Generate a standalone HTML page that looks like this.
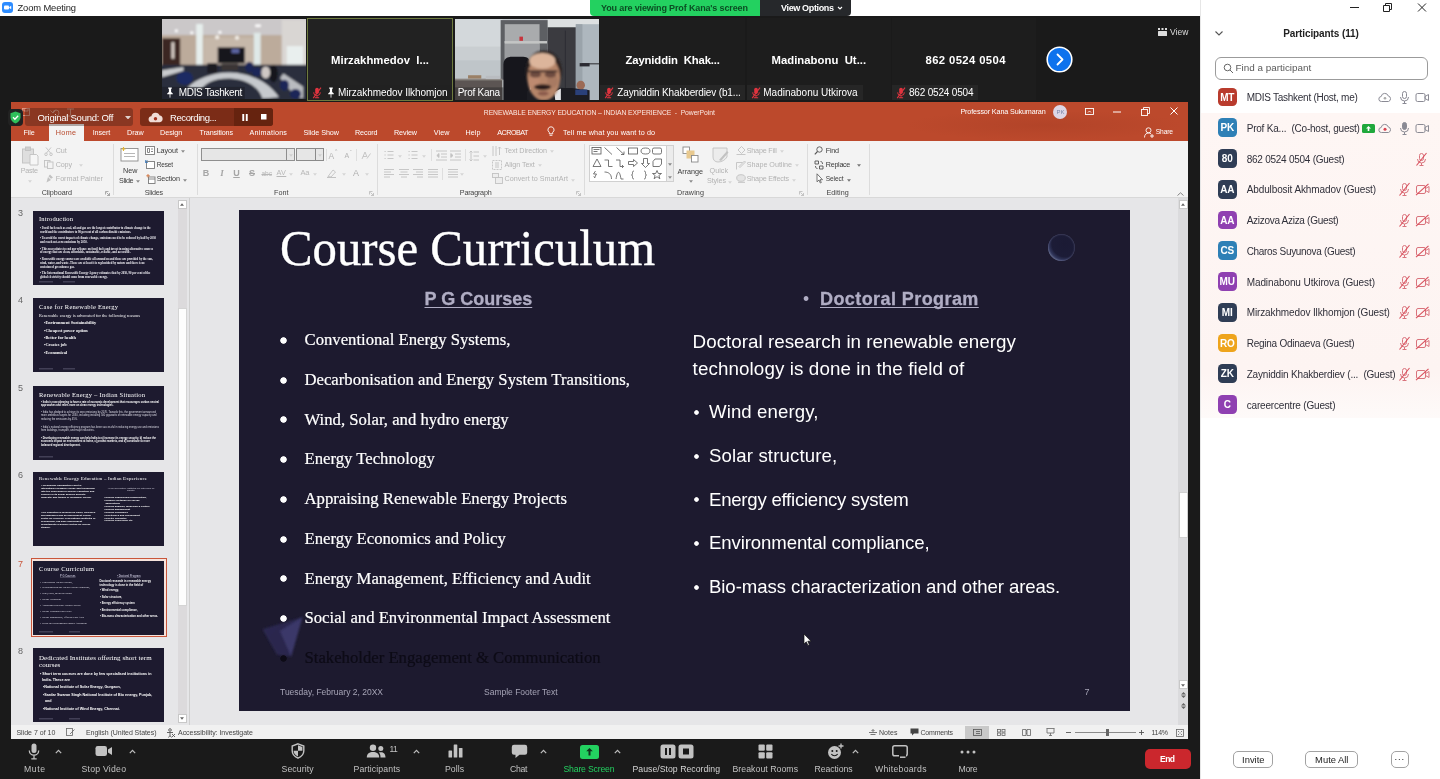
<!DOCTYPE html>
<html lang="en">
<head>
<meta charset="utf-8">
<title>Zoom Meeting</title>
<style>
*{box-sizing:border-box;margin:0;padding:0}
html,body{width:1440px;height:779px;overflow:hidden}
body{position:relative;background:#1a1a1a;font-family:"Liberation Sans",sans-serif;color:#fff;filter:saturate(1.0001)}
.abs{position:absolute}
.nw{white-space:nowrap}
/* ---------- title bar ---------- */
#titlebar{left:0;top:0;width:1440px;height:16.400px;background:#fff}
#titlebar .ttl{left:17px;top:1px;font-size:11px;color:#222;line-height:14px}
#banner{left:590px;top:0;width:170px;height:16px;background:#23d160;border-radius:0 0 0 4px;color:#0c4a22;font-size:9.5px;font-weight:bold;line-height:15px;text-align:center}
#viewopt{left:760px;top:0;width:91px;height:16px;background:#26282b;border-radius:0 0 4px 0;color:#fff;font-size:9.5px;font-weight:bold;line-height:15px;text-align:center}
/* ---------- video strip ---------- */
.tile{top:18px;height:82px;background:#232323;overflow:hidden}
.tile .big{left:0;right:0;top:31px;text-align:center;font-weight:bold;font-size:12px;line-height:20px;color:#fff;white-space:nowrap}
.tile .lbl{left:0;bottom:0;height:15px;background:rgba(20,20,20,.55);font-size:10.5px;line-height:15px;color:#fff;white-space:nowrap;padding:0 3px 0 4px}
/* ---------- ppt ---------- */
#ppt{left:11px;top:102px;width:1177px;height:637px;background:#e6e6e8;overflow:hidden}
#ppt .orange{left:0;top:0;width:1177px;height:39px;background:#bc492c}
#ribbon{left:0;top:39px;width:1177px;height:57px;background:#f3f3f3;border-bottom:1px solid #d8d8d8}
#slide{left:228px;top:108px;width:891px;height:501px;background:#1d1a2f;overflow:hidden}
#status{left:0;top:623px;width:1177px;height:14px;background:#f1f1f1;color:#444;font-size:7.5px;line-height:14px}

#lcol li{position:relative;height:39.75px;line-height:24px;padding-left:24px;white-space:nowrap}
#lcol li:before{content:"";position:absolute;left:-1.5px;top:7.85px;width:9px;height:9px;background:radial-gradient(circle at 50% 50%,#fff 2.85px,rgba(255,255,255,0) 3.65px)}
#lcol li.dk{color:#0d0b16;-webkit-text-stroke:.2px #0d0b16}
#lcol li.dk:before{background:radial-gradient(circle at 50% 50%,#0d0b16 2.85px,rgba(13,11,22,0) 3.65px)}
#rcol li{position:relative;height:43.7px;line-height:26px;padding-left:17px;white-space:nowrap}
#rcol li:before{content:"";position:absolute;left:.8px;top:9.7px;width:7px;height:7px;background:radial-gradient(circle at 50% 50%,#fff 1.9px,rgba(255,255,255,0) 2.7px)}
.ft{font-size:8.5px;line-height:12px;color:#a6a4b6}
/* ---------- zoom toolbar ---------- */
#ztb{left:0;top:739px;width:1200px;height:40px;background:#1a1a1a}
.zb{top:0;height:40px;text-align:center;color:#c9c9c9;font-size:9.5px;white-space:nowrap}
.zb span{position:absolute;left:-30px;right:-30px;top:24px;line-height:12px}
/* ---------- participants ---------- */
#pp{left:1200px;top:0;width:240px;height:779px;background:#fff;color:#222;border-left:1px solid #e6e6e6}
.row{left:0;width:240px;height:31px}
.av{left:16.7px;top:5.7px;width:19px;height:18.8px;border-radius:4.5px;color:#fff;font-size:10px;letter-spacing:-.2px;font-weight:bold;line-height:19px;text-align:center}
.nm{left:45.7px;top:8.2px;font-size:10px;line-height:16px;color:#30303a;white-space:nowrap}
.btn{top:751.2px;height:17.3px;border:1px solid #a2a2a2;border-radius:5px;font-size:9.4px;line-height:15.5px;text-align:center;color:#222;background:#fff}
</style>
</head>
<body>
<!-- ===== TITLE BAR ===== -->
<div id="titlebar" class="abs">
<svg class="abs" style="left:2px;top:2px" width="11" height="11" viewBox="0 0 11 11"><rect width="11" height="11" rx="3" fill="#2d8cff"/><rect x="2" y="3.5" width="5" height="4" rx="1" fill="#fff"/><path d="M7.3 5 9.2 3.800v3.400L7.300 6z" fill="#fff"/></svg>
<div class="abs nw" style="left:17.5px;top:1.2px;font-size:9.4px;line-height:13px;color:#1c1c1c;letter-spacing:-0.13px">Zoom Meeting</div>
</div>
<div id="banner" class="abs"></div>
<div class="abs nw" style="left:601.0px;top:1.5px;font-size:9px;line-height:13px;color:#0b4d23;font-weight:bold;letter-spacing:-0.14px">You are viewing Prof Kana's screen</div>
<div id="viewopt" class="abs"></div>
<div class="abs nw" style="left:781.0px;top:1.5px;font-size:9px;line-height:13px;color:#fff;font-weight:bold;letter-spacing:-0.35px">View Options</div>
<svg class="abs" style="left:837.0px;top:6.2px" width="6" height="5" viewBox="0 0 6 5"><path d="M1 1l2 2 2-2" fill="none" stroke="#fff" stroke-width="1.1"/></svg>
<!-- ===== VIDEO STRIP ===== -->
<div id="strip">
<div class="abs" style="left:162px;top:19px;width:144px;height:80px;background:#b9a898;overflow:hidden"><svg class="abs" style="left:0;top:0" width="144" height="80" viewBox="20 25 1305 725" preserveAspectRatio="none">
<defs><filter id="b1" x="-5%" y="-5%" width="110%" height="110%"><feGaussianBlur stdDeviation="12"/></filter></defs>
<g filter="url(#b1)">
<rect x="-20" y="0" width="1400" height="180" fill="#cbc8c9"/>
<rect x="-20" y="170" width="1400" height="290" fill="#bcab9b"/>
<rect x="400" y="190" width="450" height="250" fill="#c6b8aa"/>
<rect x="20" y="200" width="165" height="270" fill="#3b2620"/>
<rect x="105" y="235" width="28" height="150" fill="#d8cfc8"/>
<rect x="330" y="70" width="60" height="430" fill="#e6eeec"/>
<rect x="852" y="150" width="62" height="320" fill="#dfe9e8"/>
<rect x="1105" y="30" width="230" height="500" fill="#d9d6d3"/>
<rect x="1150" y="270" width="150" height="220" fill="#e9efee"/>
<rect x="-20" y="440" width="1400" height="330" fill="#2b2f3d"/>
<rect x="525" y="282" width="245" height="145" fill="#14131a"/>
<rect x="650" y="295" width="70" height="40" fill="#5c64a0"/>
<path d="M20 490 215 460v35L20 552z" fill="#c9cbcd"/>
<path d="M250 650C330 560 500 505 640 510s330 60 440 225l-150 10C900 640 780 570 640 565S420 600 380 660z" fill="#c6c9cd"/>
<path d="M1120 520 1300 640v100h-60L1090 560z" fill="#b9bbc0"/>
<ellipse cx="225" cy="560" rx="75" ry="60" fill="#1f2b63"/>
<ellipse cx="812" cy="462" rx="38" ry="50" fill="#1d2758"/>
<ellipse cx="880" cy="505" rx="45" ry="40" fill="#1d2758"/>
<ellipse cx="1030" cy="520" rx="40" ry="80" fill="#15151d"/>
<ellipse cx="960" cy="510" rx="40" ry="55" fill="#cfc8c4"/>
<ellipse cx="1130" cy="625" rx="40" ry="50" fill="#1d2758"/>
<ellipse cx="1230" cy="705" rx="50" ry="45" fill="#1d2758"/>
<rect x="430" y="425" width="90" height="90" fill="#1b1b22"/>
<rect x="560" y="430" width="150" height="60" fill="#3a3436"/>
<circle cx="150" cy="132" r="14" fill="#fff"/><circle cx="290" cy="150" r="14" fill="#fff"/><circle cx="545" cy="145" r="14" fill="#fff"/><circle cx="520" cy="190" r="18" fill="#f4f1ea"/><circle cx="700" cy="195" r="18" fill="#f4f1ea"/><rect x="865" y="75" width="50" height="22" fill="#fff"/>
</g>
<rect x="20" y="640" width="750" height="115" fill="#1a1c22" opacity=".55"/>
</svg></div>
<svg class="abs" style="left:166.0px;top:86.5px" width="8" height="11" viewBox="0 0 8 11"><path d="M2.200.5h3.600v.9l-.7.500v3l1.700 1.500v.8H4.400V10.300L4 11l-.4-.7V7.200H1.200v-.8l1.700-1.500v-3l-.7-.5z" fill="#fff"/></svg>
<div class="abs nw" style="left:178.8px;top:85.9px;font-size:10px;line-height:14px;color:#fff;letter-spacing:-0.35px">MDIS Tashkent</div>
<div class="abs" style="left:307px;top:18px;width:146px;height:83px;background:#222;border:1px solid #6d7a3e"></div>
<div class="abs" style="left:308px;top:85px;width:144px;height:15px;background:rgba(34,34,34,.6)"></div>
<div class="abs nw" style="left:331.0px;top:51.5px;font-size:11.3px;line-height:16px;color:#fff;font-weight:bold;letter-spacing:0.04px">Mirzakhmedov&nbsp; I...</div>
<svg class="abs" style="left:311.5px;top:87.0px" width="10" height="12" viewBox="0 0 10 12"><g fill="#e0343f" stroke="none"><rect x="3.2" y=".8" width="3.600" height="6.200" rx="1.800"/><path d="M1.300 5.200h.9a2.800 2.800 0 0 0 5.600 0h.9a3.700 3.700 0 0 1-3.250 3.650V10.300h1.700v.9H2.850v-.9h1.700V8.850A3.700 3.700 0 0 1 1.300 5.200z"/></g><path d="M9 .6 1.200 11.200" stroke="#e0343f" stroke-width="1.100"/></svg>
<svg class="abs" style="left:326.5px;top:86.5px" width="8" height="11" viewBox="0 0 8 11"><path d="M2.200.5h3.600v.9l-.7.500v3l1.700 1.500v.8H4.400V10.300L4 11l-.4-.7V7.200H1.200v-.8l1.700-1.500v-3l-.7-.5z" fill="#fff"/></svg>
<div class="abs nw" style="left:338.0px;top:85.9px;font-size:10px;line-height:14px;color:#fff;letter-spacing:-0.05px">Mirzakhmedov Ilkhomjon</div>
<div class="abs" style="left:454.5px;top:19px;width:144px;height:80.5px;background:#c8cdd0;overflow:hidden"><svg class="abs" style="left:0;top:0" width="144" height="80.5" viewBox="42 25 1303 730" preserveAspectRatio="none">
<defs><filter id="b2" x="-5%" y="-5%" width="110%" height="110%"><feGaussianBlur stdDeviation="6"/></filter><filter id="b3" x="-20%" y="-20%" width="140%" height="140%"><feGaussianBlur stdDeviation="11"/></filter></defs>
<g filter="url(#b2)">
<rect x="0" y="0" width="1400" height="800" fill="#c9ced1"/>
<rect x="42" y="25" width="430" height="250" fill="#d3d8db"/><rect x="42" y="400" width="430" height="180" fill="#bfc5c9"/>
<rect x="880" y="0" width="500" height="120" fill="#dde0e1"/>
<rect x="455" y="35" width="425" height="540" fill="#5d5f63"/>
<rect x="492" y="72" width="315" height="340" fill="#a9abad"/>
<rect x="492" y="250" width="315" height="170" fill="#9b9da0"/>
<rect x="490" y="225" width="385" height="22" fill="#c3c5c4"/>
<rect x="625" y="185" width="32" height="38" fill="#c8343c"/>
<rect x="880" y="100" width="310" height="560" fill="#3a3b41"/>
<rect x="1036" y="130" width="8" height="520" fill="#2b2c31"/>
<rect x="1135" y="72" width="230" height="700" fill="#aeb7be"/>
<rect x="1135" y="72" width="60" height="700" fill="#9aa3aa"/>
<rect x="1190" y="425" width="170" height="12" fill="#4a4d52"/>
<rect x="1170" y="425" width="90" height="30" fill="#2a2b30"/>
<rect x="0" y="572" width="470" height="200" fill="#5b5552"/>
<rect x="0" y="566" width="470" height="16" fill="#8a8480"/>
<rect x="160" y="535" width="120" height="30" fill="#9b8066"/>
<rect x="320" y="540" width="130" height="30" fill="#b9bcc0"/>
<path d="M480 760V440c0-50 30-72 80-72h100c40 0 60 25 60 60v332z" fill="#17171d"/>
<path d="M690 760V670c100-30 400-30 570 0v90z" fill="#1a1a20"/>
<ellipse cx="1180" cy="625" rx="38" ry="40" fill="#9c6a55"/>
<rect x="1130" y="665" width="110" height="50" fill="#2a3f7a"/>
<path d="M940 690 1000 655v110H950z" fill="#e4e4e6"/>
</g>
<g filter="url(#b3)">
<ellipse cx="845" cy="500" rx="165" ry="190" fill="#2b2321"/>
<ellipse cx="845" cy="560" rx="148" ry="205" fill="#b58569"/>
<ellipse cx="832" cy="405" rx="118" ry="72" fill="#dcb59b"/>
<ellipse cx="760" cy="590" rx="50" ry="60" fill="#bd8a70"/>
<ellipse cx="925" cy="590" rx="50" ry="60" fill="#a87a62"/>
<ellipse cx="770" cy="528" rx="52" ry="28" fill="#6e4c3f"/>
<ellipse cx="905" cy="528" rx="52" ry="28" fill="#6e4c3f"/>
<rect x="700" y="492" width="270" height="16" rx="8" fill="#2f2320"/>
<ellipse cx="835" cy="642" rx="78" ry="26" fill="#2c1d1a"/>
<ellipse cx="840" cy="700" rx="50" ry="20" fill="#8a5a4b"/>
</g>
<rect x="42" y="645" width="440" height="115" fill="#2a2a2c" opacity=".5"/>
</svg>
</div>
<div class="abs nw" style="left:457.7px;top:85.9px;font-size:10px;line-height:14px;color:#fff;letter-spacing:-0.25px">Prof Kana</div>
<div class="abs" style="left:599.5px;top:18px;width:145px;height:82px;background:#1d1d1d"></div>
<div class="abs" style="left:599.5px;top:85px;width:145px;height:15px;background:#262626"></div>
<div class="abs" style="left:747px;top:18px;width:144px;height:82px;background:#1d1d1d"></div>
<div class="abs" style="left:747px;top:85px;width:115.5px;height:15px;background:#262626"></div>
<div class="abs" style="left:892px;top:18px;width:144px;height:82px;background:#1d1d1d"></div>
<div class="abs" style="left:892px;top:85px;width:86px;height:15px;background:#262626"></div>
<div class="abs nw" style="left:625.5px;top:51.5px;font-size:11.3px;line-height:16px;color:#fff;font-weight:bold;letter-spacing:-0.13px">Zayniddin&nbsp; Khak...</div>
<svg class="abs" style="left:603.5px;top:87.0px" width="10" height="12" viewBox="0 0 10 12"><g fill="#e0343f" stroke="none"><rect x="3.2" y=".8" width="3.600" height="6.200" rx="1.800"/><path d="M1.300 5.200h.9a2.800 2.800 0 0 0 5.600 0h.9a3.700 3.700 0 0 1-3.250 3.650V10.300h1.700v.9H2.850v-.9h1.700V8.850A3.700 3.700 0 0 1 1.300 5.200z"/></g><path d="M9 .6 1.200 11.200" stroke="#e0343f" stroke-width="1.100"/></svg>
<div class="abs nw" style="left:617.3px;top:85.9px;font-size:10px;line-height:14px;color:#fff;letter-spacing:-0.14px">Zayniddin Khakberdiev (b1...</div>
<div class="abs nw" style="left:771.5px;top:51.5px;font-size:11.3px;line-height:16px;color:#fff;font-weight:bold;letter-spacing:0.03px">Madinabonu&nbsp; Ut...</div>
<svg class="abs" style="left:750.5px;top:87.0px" width="10" height="12" viewBox="0 0 10 12"><g fill="#e0343f" stroke="none"><rect x="3.2" y=".8" width="3.600" height="6.200" rx="1.800"/><path d="M1.300 5.200h.9a2.800 2.800 0 0 0 5.600 0h.9a3.700 3.700 0 0 1-3.250 3.650V10.300h1.700v.9H2.850v-.9h1.700V8.850A3.700 3.700 0 0 1 1.300 5.200z"/></g><path d="M9 .6 1.200 11.200" stroke="#e0343f" stroke-width="1.100"/></svg>
<div class="abs nw" style="left:763.3px;top:85.9px;font-size:10px;line-height:14px;color:#fff;letter-spacing:-0.01px">Madinabonu Utkirova</div>
<div class="abs nw" style="left:925.5px;top:51.5px;font-size:11.3px;line-height:16px;color:#fff;font-weight:bold;letter-spacing:0.38px">862 0524 0504</div>
<svg class="abs" style="left:895.5px;top:87.0px" width="10" height="12" viewBox="0 0 10 12"><g fill="#e0343f" stroke="none"><rect x="3.2" y=".8" width="3.600" height="6.200" rx="1.800"/><path d="M1.300 5.200h.9a2.800 2.800 0 0 0 5.600 0h.9a3.700 3.700 0 0 1-3.250 3.650V10.300h1.700v.9H2.850v-.9h1.700V8.850A3.700 3.700 0 0 1 1.300 5.200z"/></g><path d="M9 .6 1.200 11.200" stroke="#e0343f" stroke-width="1.100"/></svg>
<div class="abs nw" style="left:909.0px;top:85.9px;font-size:10px;line-height:14px;color:#fff;letter-spacing:-0.19px">862 0524 0504</div>
<svg class="abs" style="left:1046.0px;top:46.0px" width="27" height="27" viewBox="0 0 27 27"><circle cx="13.500" cy="13.500" r="12.300" fill="#0e72ed" stroke="#fff" stroke-width="1.600"/><path d="M11.500 8.500l5 5-5 5" fill="none" stroke="#fff" stroke-width="1.800" stroke-linecap="round" stroke-linejoin="round"/></svg>
<svg class="abs" style="left:1157.5px;top:27.5px" width="9" height="8" viewBox="0 0 9 8"><g fill="#ddd"><rect x="0" y="0" width="2" height="2"/><rect x="3.500" y="0" width="2" height="2"/><rect x="7" y="0" width="2" height="2"/><rect x="0" y="3" width="9" height="5" rx=".5"/></g></svg>
<div class="abs nw" style="left:1170.0px;top:25.5px;font-size:8.5px;line-height:12px;color:#ddd;letter-spacing:0.07px">View</div>
</div>
<!-- ===== POWERPOINT WINDOW ===== -->
<div id="ppt" class="abs">
<div class="abs orange"></div>
<div class="abs" style="left:889.0px;top:10.0px;width:288.0px;height:29.0px;background:radial-gradient(ellipse at 50% 45%,#a93f25 0,rgba(169,63,37,0) 68%);opacity:.5"></div>
<svg class="abs" style="left:10.0px;top:5.0px" width="60" height="10" viewBox="0 0 60 10"><g fill="none" stroke="#e9b6a6" stroke-width=".9" opacity=".75"><rect x="1.500" y="1.500" width="7" height="7"/><path d="M3 1.500v2.500h4V1.500M32 6a3 3 0 1 1 3 3M29.500 3.500 32 6l2.500-2.500M46 2h7M49.500 2v6M45 9h9"/></g></svg>
<div class="abs" style="left:38.0px;top:21.5px;width:35.0px;height:18.0px;background:#f3f3f3"></div>
<div class="abs nw" style="left:12.5px;top:26.0px;font-size:7.2px;line-height:10px;color:#fff;letter-spacing:-0.10px">File</div>
<div class="abs nw" style="left:81.7px;top:26.0px;font-size:7.2px;line-height:10px;color:#fff;letter-spacing:-0.06px">Insert</div>
<div class="abs nw" style="left:116.0px;top:26.0px;font-size:7.2px;line-height:10px;color:#fff;letter-spacing:0.01px">Draw</div>
<div class="abs nw" style="left:149.0px;top:26.0px;font-size:7.2px;line-height:10px;color:#fff;letter-spacing:-0.01px">Design</div>
<div class="abs nw" style="left:188.6px;top:26.0px;font-size:7.2px;line-height:10px;color:#fff;letter-spacing:-0.15px">Transitions</div>
<div class="abs nw" style="left:238.6px;top:26.0px;font-size:7.2px;line-height:10px;color:#fff;letter-spacing:0.20px">Animations</div>
<div class="abs nw" style="left:292.5px;top:26.0px;font-size:7.2px;line-height:10px;color:#fff;letter-spacing:-0.05px">Slide Show</div>
<div class="abs nw" style="left:344.0px;top:26.0px;font-size:7.2px;line-height:10px;color:#fff;letter-spacing:-0.13px">Record</div>
<div class="abs nw" style="left:383.0px;top:26.0px;font-size:7.2px;line-height:10px;color:#fff;letter-spacing:-0.12px">Review</div>
<div class="abs nw" style="left:422.8px;top:26.0px;font-size:7.2px;line-height:10px;color:#fff;letter-spacing:0.05px">View</div>
<div class="abs nw" style="left:454.4px;top:26.0px;font-size:7.2px;line-height:10px;color:#fff;letter-spacing:0.13px">Help</div>
<div class="abs nw" style="left:486.3px;top:26.0px;font-size:7.2px;line-height:10px;color:#fff;letter-spacing:-0.50px">ACROBAT</div>
<div class="abs nw" style="left:44.8px;top:26.0px;font-size:7.2px;line-height:10px;color:#b7472a;letter-spacing:0.34px">Home</div>
<svg class="abs" style="left:535.5px;top:24.0px" width="8" height="11" viewBox="0 0 8 11"><g fill="none" stroke="#fff" stroke-width=".9"><path d="M4 .8a3 3 0 0 1 1.700 5.500v1.500H2.300V6.300A3 3 0 0 1 4 .8zM2.600 9.300h2.800"/></g></svg>
<div class="abs nw" style="left:552.0px;top:26.0px;font-size:7.2px;line-height:10px;color:#fff;letter-spacing:0.13px">Tell me what you want to do</div>
<div class="abs nw" style="left:472.8px;top:6.0px;font-size:6.8px;line-height:10px;color:#fbe9e3;letter-spacing:-0.07px">RENEWABLE ENERGY EDUCATION &ndash; INDIAN EXPERIENCE &nbsp;-&nbsp; PowerPoint</div>
<div class="abs nw" style="left:949.4px;top:4.5px;font-size:7.2px;line-height:10px;color:#fff;letter-spacing:-0.13px">Professor Kana Sukumaran</div>
<div class="abs" style="left:1042.4px;top:2.5px;width:14.0px;height:14.0px;border-radius:50%;background:#ddd6e6"></div>
<div class="abs nw" style="left:1045.6px;top:5.6px;font-size:6px;line-height:8px;color:#7d86a8;letter-spacing:-0.22px">PK</div>
<svg class="abs" style="left:1073.5px;top:5.5px" width="9" height="7" viewBox="0 0 9 7"><g fill="none" stroke="#fff" stroke-width=".9"><rect x=".5" y=".5" width="8" height="6"/><path d="M3 4.500 4.500 3 6 4.500" /></g></svg>
<svg class="abs" style="left:1102.0px;top:8.5px" width="8" height="2" viewBox="0 0 8 2"><path d="M0 1h8" stroke="#fff" stroke-width="1"/></svg>
<svg class="abs" style="left:1130.0px;top:4.5px" width="9" height="9" viewBox="0 0 9 9"><g fill="none" stroke="#fff" stroke-width=".9"><rect x=".5" y="2.500" width="6" height="6"/><path d="M2.500 2.500v-2h6v6h-2"/></g></svg>
<svg class="abs" style="left:1159.0px;top:5.0px" width="8" height="8" viewBox="0 0 8 8"><path d="M.5.5l7 7M7.500.5l-7 7" stroke="#fff" stroke-width="1"/></svg>
<svg class="abs" style="left:1132.5px;top:24.5px" width="10" height="11" viewBox="0 0 10 11"><g fill="none" stroke="#fff" stroke-width=".9"><circle cx="4.500" cy="3.300" r="2.500"/><path d="M.5 10.500c0-3 1.800-4.500 4-4.500 1 0 1.800.3 2.500.8M8 7v4M6 9h4"/></g></svg>
<div class="abs nw" style="left:1144.8px;top:24.7px;font-size:6.69px;line-height:10px;color:#fff;letter-spacing:-0.16px">Share</div>
<div id="ribbon" class="abs"></div>
<div class="abs" style="left:101.5px;top:42.0px;width:1.0px;height:51.0px;background:#dcdcdc"></div>
<div class="abs" style="left:185.5px;top:42.0px;width:1.0px;height:51.0px;background:#dcdcdc"></div>
<div class="abs" style="left:365.5px;top:42.0px;width:1.0px;height:51.0px;background:#dcdcdc"></div>
<div class="abs" style="left:572.8px;top:42.0px;width:1.0px;height:51.0px;background:#dcdcdc"></div>
<div class="abs" style="left:795.7px;top:42.0px;width:1.0px;height:51.0px;background:#dcdcdc"></div>
<div class="abs" style="left:857.5px;top:42.0px;width:1.0px;height:51.0px;background:#dcdcdc"></div>
<svg class="abs" style="left:10.0px;top:44.0px" width="18" height="20" viewBox="0 0 18 20"><g fill="#dedede" stroke="#c2c2c2" stroke-width=".9"><rect x="1.500" y="3" width="11" height="14"/><rect x="4.500" y="1" width="5" height="3.500" fill="#cfcfcf"/><path d="M9 8.500h6.500l1.500 1.500v9H9z" fill="#f6f6f6"/></g></svg>
<div class="abs nw" style="left:9.8px;top:64.0px;font-size:7.2px;line-height:10px;color:#b3b3b3;letter-spacing:-0.30px">Paste</div>
<svg class="abs" style="left:16.5px;top:78.0px" width="4" height="3" viewBox="0 0 4 3"><path d="M0 .3h4L2 2.700z" fill="#d6d6d6"/></svg>
<svg class="abs" style="left:33.0px;top:44.5px" width="9" height="9" viewBox="0 0 9 9"><g fill="none" stroke="#c2c2c2" stroke-width=".9"><path d="M2 .5 6.500 6M7 .5 2.500 6"/><circle cx="2" cy="7.300" r="1.300"/><circle cx="7" cy="7.300" r="1.300"/></g></svg>
<div class="abs nw" style="left:44.8px;top:43.5px;font-size:7.2px;line-height:10px;color:#b3b3b3;letter-spacing:-0.14px">Cut</div>
<svg class="abs" style="left:33.0px;top:58.0px" width="10" height="9" viewBox="0 0 10 9"><g fill="#f3f3f3" stroke="#c2c2c2" stroke-width=".9"><rect x=".5" y=".5" width="5.500" height="6.500"/><rect x="3.500" y="2" width="5.500" height="6.500"/></g></svg>
<div class="abs nw" style="left:44.8px;top:57.5px;font-size:7.2px;line-height:10px;color:#b3b3b3;letter-spacing:-0.19px">Copy</div>
<svg class="abs" style="left:68.0px;top:62.0px" width="4" height="3" viewBox="0 0 4 3"><path d="M0 .3h4L2 2.700z" fill="#d6d6d6"/></svg>
<svg class="abs" style="left:33.5px;top:72.0px" width="9" height="9" viewBox="0 0 9 9"><g fill="#c2c2c2"><path d="M5 .5l3 3-2 1.200-2.500-2.500zM3 3l3 3-4.500 2.500z"/></g></svg>
<div class="abs nw" style="left:44.8px;top:72.0px;font-size:7.2px;line-height:10px;color:#b3b3b3;letter-spacing:-0.03px">Format Painter</div>
<div class="abs nw" style="left:30.7px;top:85.9px;font-size:7.2px;line-height:10px;color:#444;letter-spacing:-0.07px">Clipboard</div>
<svg class="abs" style="left:94.0px;top:88.5px" width="5" height="5" viewBox="0 0 5 5"><path d="M.5.5h3M.5.5v3M1.500 1.500l3 3M4.500 2v2.500H2" fill="none" stroke="#8a8a8a" stroke-width=".7"/></svg>
<svg class="abs" style="left:109.0px;top:44.5px" width="19" height="15" viewBox="0 0 19 15"><g fill="#fff" stroke="#8c8c8c" stroke-width=".9"><rect x="1" y="1.500" width="17" height="12.500"/><path d="M4 6.500h11M4 9.500h11" fill="none" stroke="#b0b0b0"/></g><path d="M3.500 0v4M1.500 2h4" stroke="#e3b532" stroke-width="1.100"/></svg>
<div class="abs nw" style="left:112.0px;top:64.0px;font-size:7.2px;line-height:10px;color:#3b3b3b;letter-spacing:0.05px">New</div>
<div class="abs nw" style="left:108.0px;top:73.5px;font-size:7.2px;line-height:10px;color:#3b3b3b;letter-spacing:-0.37px">Slide</div>
<svg class="abs" style="left:125.0px;top:78.0px" width="4" height="3" viewBox="0 0 4 3"><path d="M0 .3h4L2 2.700z" fill="#8c8c8c"/></svg>
<svg class="abs" style="left:134.0px;top:43.5px" width="10" height="9" viewBox="0 0 10 9"><g fill="#fff" stroke="#7a7a7a" stroke-width=".9"><rect x=".5" y=".5" width="9" height="8"/><path d="M2.500 2.500h2v4h-2zM6 3h2M6 5.500h2" fill="none"/></g></svg>
<div class="abs nw" style="left:145.7px;top:43.5px;font-size:7.2px;line-height:10px;color:#3b3b3b;letter-spacing:-0.06px">Layout</div>
<svg class="abs" style="left:169.5px;top:48.0px" width="4" height="3" viewBox="0 0 4 3"><path d="M0 .3h4L2 2.700z" fill="#8c8c8c"/></svg>
<svg class="abs" style="left:134.0px;top:57.5px" width="10" height="9" viewBox="0 0 10 9"><g fill="#fff" stroke="#7a7a7a" stroke-width=".9"><rect x="1.500" y="1.500" width="8" height="7"/><path d="M0 2.500 2.500 0M.3 0v2.500h2.500" fill="none" stroke="#3b78b8"/></g></svg>
<div class="abs nw" style="left:145.7px;top:57.5px;font-size:6.48px;line-height:10px;color:#3b3b3b;letter-spacing:-0.15px">Reset</div>
<svg class="abs" style="left:134.5px;top:71.5px" width="10" height="10" viewBox="0 0 10 10"><g fill="#fff" stroke="#7a7a7a" stroke-width=".9"><rect x="2.500" y="3" width="6.500" height="6.500"/><path d="M2.500 5h6.500" fill="none"/></g><path d="M2 0v3.500M.3 1.800h3.500" stroke="#d0703a" stroke-width=".9"/></svg>
<div class="abs nw" style="left:145.7px;top:72.0px;font-size:7.2px;line-height:10px;color:#3b3b3b;letter-spacing:-0.11px">Section</div>
<svg class="abs" style="left:171.5px;top:76.5px" width="4" height="3" viewBox="0 0 4 3"><path d="M0 .3h4L2 2.700z" fill="#8c8c8c"/></svg>
<div class="abs nw" style="left:133.8px;top:85.9px;font-size:7.2px;line-height:10px;color:#444;letter-spacing:-0.28px">Slides</div>
<div class="abs" style="left:190.0px;top:46.3px;width:85.5px;height:13.2px;border:1px solid #8f8f8f;background:#e6e6e6"></div>
<div class="abs" style="left:275.5px;top:46.3px;width:8.0px;height:13.2px;border:1px solid #8f8f8f;border-left:0;background:#e6e6e6"></div>
<svg class="abs" style="left:277.5px;top:52.0px" width="4" height="3" viewBox="0 0 4 3"><path d="M0 .3h4L2 2.700z" fill="#cfcfcf"/></svg>
<div class="abs" style="left:284.5px;top:46.3px;width:20.0px;height:13.2px;border:1px solid #8a8a8a;background:#e6e6e6"></div>
<div class="abs" style="left:304.5px;top:46.3px;width:8.0px;height:13.2px;border:1px solid #8a8a8a;border-left:0;background:#e6e6e6"></div>
<svg class="abs" style="left:306.5px;top:52.0px" width="4" height="3" viewBox="0 0 4 3"><path d="M0 .3h4L2 2.700z" fill="#cfcfcf"/></svg>
<div class="abs nw" style="left:191.5px;top:64.8px;font-size:9px;line-height:13px;color:#a6a6a6;font-weight:bold;font-weight:bold;width:7px;text-align:center;">B</div>
<div class="abs nw" style="left:207.5px;top:64.8px;font-size:9px;line-height:13px;color:#a6a6a6;font-style:italic;font-family:'Liberation Serif',serif;font-weight:bold;width:7px;text-align:center;">I</div>
<div class="abs nw" style="left:222.0px;top:64.8px;font-size:9px;line-height:13px;color:#a6a6a6;text-decoration:underline;font-weight:bold;width:7px;text-align:center;">U</div>
<div class="abs nw" style="left:237.5px;top:64.8px;font-size:9px;line-height:13px;color:#a6a6a6;text-decoration:line-through;font-weight:bold;width:7px;text-align:center;">S</div>
<div class="abs nw" style="left:250.5px;top:66.5px;font-size:6.5px;line-height:9px;color:#b8b8b8;text-decoration:line-through;letter-spacing:0.01px">abc</div>
<div class="abs nw" style="left:265.5px;top:66.0px;font-size:7.31px;line-height:9px;color:#b8b8b8;text-decoration:underline;letter-spacing:0.28px">AV</div>
<svg class="abs" style="left:278.0px;top:70.5px" width="4" height="3" viewBox="0 0 4 3"><path d="M0 .3h4L2 2.700z" fill="#d6d6d6"/></svg>
<div class="abs nw" style="left:289.5px;top:66.0px;font-size:7.5px;line-height:10px;color:#b8b8b8;letter-spacing:-0.19px">Aa</div>
<svg class="abs" style="left:301.5px;top:70.5px" width="4" height="3" viewBox="0 0 4 3"><path d="M0 .3h4L2 2.700z" fill="#d6d6d6"/></svg>
<svg class="abs" style="left:316.0px;top:66.5px" width="10" height="9" viewBox="0 0 10 9"><path d="M1 7.500 6 1l2.500 2L4 8z" fill="none" stroke="#c2c2c2" stroke-width=".9"/><path d="M0 8.500h9" stroke="#c2c2c2" stroke-width="1"/></svg>
<svg class="abs" style="left:330.5px;top:70.5px" width="4" height="3" viewBox="0 0 4 3"><path d="M0 .3h4L2 2.700z" fill="#d6d6d6"/></svg>
<div class="abs nw" style="left:342.0px;top:64.5px;font-size:9px;line-height:13px;color:#b0b0b0;letter-spacing:0.48px">A</div>
<svg class="abs" style="left:354.0px;top:70.5px" width="4" height="3" viewBox="0 0 4 3"><path d="M0 .3h4L2 2.700z" fill="#d6d6d6"/></svg>
<div class="abs nw" style="left:317.5px;top:47.5px;font-size:8.5px;line-height:12px;color:#b4b4b4;letter-spacing:0.33px">A</div>
<div class="abs nw" style="left:324.0px;top:46.0px;font-size:5px;line-height:7px;color:#b4b4b4;">^</div>
<div class="abs nw" style="left:333.5px;top:49.0px;font-size:7px;line-height:10px;color:#b4b4b4;letter-spacing:0.33px">A</div>
<div class="abs nw" style="left:339.0px;top:47.0px;font-size:5px;line-height:7px;color:#b4b4b4;">&#711;</div>
<svg class="abs" style="left:349.5px;top:48.5px" width="10" height="9" viewBox="0 0 10 9"><path d="M1 8 4 1l2 5M2 5.500h3.500M6 7.500l3.500-5" fill="none" stroke="#c2c2c2" stroke-width=".9"/></svg>
<div class="abs" style="left:314.5px;top:47.0px;width:1.0px;height:12.0px;background:#dedede"></div>
<div class="abs" style="left:344.5px;top:47.0px;width:1.0px;height:12.0px;background:#dedede"></div>
<div class="abs nw" style="left:263.0px;top:85.9px;font-size:7.2px;line-height:10px;color:#444;letter-spacing:0.04px">Font</div>
<svg class="abs" style="left:358.0px;top:88.5px" width="5" height="5" viewBox="0 0 5 5"><path d="M.5.5h3M.5.5v3M1.500 1.500l3 3M4.500 2v2.500H2" fill="none" stroke="#b0b0b0" stroke-width=".7"/></svg>
<svg class="abs" style="left:372.5px;top:48.0px" width="10" height="10" viewBox="0 0 10 10"><g fill="none" stroke="#c2c2c2" stroke-width=".9"><path d="M3.500 1.500h6M3.500 5h6M3.500 8.500h6"/><path d="M.5 1.500h1.200M.5 5h1.200M.5 8.500h1.200"/></g></svg>
<svg class="abs" style="left:386.5px;top:52.5px" width="4" height="3" viewBox="0 0 4 3"><path d="M0 .3h4L2 2.700z" fill="#d6d6d6"/></svg>
<svg class="abs" style="left:397.0px;top:48.0px" width="10" height="10" viewBox="0 0 10 10"><g fill="none" stroke="#c2c2c2" stroke-width=".9"><path d="M3.500 1.500h6M3.500 5h6M3.500 8.500h6"/><path d="M.5 1.500h1.200M.5 5h1.200M.5 8.500h1.200"/></g></svg>
<svg class="abs" style="left:410.5px;top:52.5px" width="4" height="3" viewBox="0 0 4 3"><path d="M0 .3h4L2 2.700z" fill="#d6d6d6"/></svg>
<svg class="abs" style="left:424.5px;top:48.0px" width="11" height="11" viewBox="0 0 11 11"><g fill="none" stroke="#c2c2c2" stroke-width=".9"><path d="M0 1h11M5 4h6M5 7h6M0 10h11"/><path d="M3 3.500.8 5.500 3 7.500z" fill="#c2c2c2"/></g></svg>
<svg class="abs" style="left:439.0px;top:48.0px" width="11" height="11" viewBox="0 0 11 11"><g fill="none" stroke="#c2c2c2" stroke-width=".9"><path d="M0 1h11M5 4h6M5 7h6M0 10h11"/><path d="M.8 3.500 3 5.500.8 7.500z" fill="#c2c2c2"/></g></svg>
<div class="abs" style="left:419.5px;top:47.0px;width:1.0px;height:12.0px;background:#dedede"></div>
<div class="abs" style="left:453.5px;top:47.0px;width:1.0px;height:12.0px;background:#dedede"></div>
<svg class="abs" style="left:458.0px;top:47.5px" width="10" height="12" viewBox="0 0 10 12"><g fill="none" stroke="#c2c2c2" stroke-width=".9"><path d="M4.500 2h5.500M4.500 6h5.500M4.500 10h5.500M2 1v10M.5 2.500 2 1l1.500 1.500M.5 9.500 2 11l1.500-1.500"/></g></svg>
<svg class="abs" style="left:471.5px;top:52.5px" width="4" height="3" viewBox="0 0 4 3"><path d="M0 .3h4L2 2.700z" fill="#d6d6d6"/></svg>
<svg class="abs" style="left:373.0px;top:67.0px" width="10" height="9" viewBox="0 0 10 9"><g fill="none" stroke="#c2c2c2" stroke-width=".9"><path d="M0 .5h10M0 3h7M0 5.500h10M0 8h6"/></g></svg>
<svg class="abs" style="left:387.5px;top:67.0px" width="10" height="9" viewBox="0 0 10 9"><g fill="none" stroke="#c2c2c2" stroke-width=".9"><path d="M0 .5h10M1.500 3h7M0 5.500h10M2 8h6"/></g></svg>
<svg class="abs" style="left:402.0px;top:67.0px" width="10" height="9" viewBox="0 0 10 9"><g fill="none" stroke="#c2c2c2" stroke-width=".9"><path d="M0 .5h10M3 3h7M0 5.500h10M4 8h6"/></g></svg>
<svg class="abs" style="left:416.5px;top:67.0px" width="10" height="9" viewBox="0 0 10 9"><g fill="none" stroke="#c2c2c2" stroke-width=".9"><path d="M0 .5h10M0 3h10M0 5.500h10M0 8h10"/></g></svg>
<div class="abs" style="left:430.5px;top:66.0px;width:1.0px;height:12.0px;background:#dedede"></div>
<svg class="abs" style="left:436.5px;top:67.0px" width="10" height="9" viewBox="0 0 10 9"><g fill="none" stroke="#c2c2c2" stroke-width=".9"><path d="M0 .5h10M0 3h10M0 5.500h10M0 8h10"/></g></svg>
<svg class="abs" style="left:449.0px;top:70.5px" width="4" height="3" viewBox="0 0 4 3"><path d="M0 .3h4L2 2.700z" fill="#d6d6d6"/></svg>
<svg class="abs" style="left:481.0px;top:43.5px" width="10" height="10" viewBox="0 0 10 10"><g fill="none" stroke="#c2c2c2" stroke-width=".9"><path d="M1 0v10M4 0v10M7.500 9V1M6 2.500 7.500 1 9 2.500"/></g></svg>
<div class="abs nw" style="left:493.6px;top:43.5px;font-size:7.2px;line-height:10px;color:#b3b3b3;letter-spacing:-0.09px">Text Direction</div>
<svg class="abs" style="left:539.0px;top:48.0px" width="4" height="3" viewBox="0 0 4 3"><path d="M0 .3h4L2 2.700z" fill="#d6d6d6"/></svg>
<svg class="abs" style="left:481.0px;top:57.5px" width="10" height="10" viewBox="0 0 10 10"><g fill="none" stroke="#c2c2c2" stroke-width=".9"><rect x=".5" y=".5" width="9" height="9" stroke-dasharray="2 1"/><path d="M3 3h4M3 5h4M3 7h4"/></g></svg>
<div class="abs nw" style="left:493.6px;top:57.5px;font-size:7.2px;line-height:10px;color:#b3b3b3;letter-spacing:-0.09px">Align Text</div>
<svg class="abs" style="left:526.5px;top:62.0px" width="4" height="3" viewBox="0 0 4 3"><path d="M0 .3h4L2 2.700z" fill="#d6d6d6"/></svg>
<svg class="abs" style="left:481.0px;top:71.0px" width="11" height="11" viewBox="0 0 11 11"><g fill="#ededed" stroke="#c2c2c2" stroke-width=".9"><rect x=".5" y=".5" width="6" height="4"/><rect x="3.500" y="4.500" width="7" height="6"/></g></svg>
<div class="abs nw" style="left:493.6px;top:72.0px;font-size:7.2px;line-height:10px;color:#b3b3b3;letter-spacing:-0.01px">Convert to SmartArt</div>
<svg class="abs" style="left:560.0px;top:76.5px" width="4" height="3" viewBox="0 0 4 3"><path d="M0 .3h4L2 2.700z" fill="#d6d6d6"/></svg>
<div class="abs nw" style="left:448.8px;top:85.9px;font-size:7.2px;line-height:10px;color:#444;letter-spacing:-0.21px">Paragraph</div>
<svg class="abs" style="left:565.0px;top:88.5px" width="5" height="5" viewBox="0 0 5 5"><path d="M.5.5h3M.5.5v3M1.500 1.500l3 3M4.500 2v2.500H2" fill="none" stroke="#b0b0b0" stroke-width=".7"/></svg>
<div class="abs" style="left:578.4px;top:42.8px;width:84.4px;height:37.5px;background:#fff;border:1px solid #d0d0d0"></div>
<div class="abs" style="left:654.8px;top:42.8px;width:8.0px;height:37.5px;background:#ececec;border:1px solid #d0d0d0"></div>
<svg class="abs" style="left:656.8px;top:61.0px" width="4" height="3" viewBox="0 0 4 3"><path d="M0 .3h4L2 2.700z" fill="#888"/></svg>
<svg class="abs" style="left:656.8px;top:73.5px" width="4" height="3" viewBox="0 0 4 3"><path d="M0 .3h4L2 2.700z" fill="#8c8c8c"/></svg>
<svg class="abs" style="left:578.4px;top:43.0px" width="76" height="37" viewBox="0 0 76 37"><g fill="none" stroke="#555" stroke-width=".8">
<rect x="3" y="2.500" width="9" height="6.500"/><path d="M4.500 4.500h6M4.500 6.500h4"/>
<path d="M15.500 2.500l7.500 7"/><path d="M27.500 2.500l7.500 7M35 6.500v3h-3"/>
<rect x="39.500" y="3" width="9" height="6"/><ellipse cx="56.500" cy="6" rx="4.500" ry="3"/><rect x="63.500" y="3" width="9" height="6" rx="1.500"/>
<path d="M4 21.500 8 14l4 7.500z"/><path d="M15.500 15h4v6.500h4"/><path d="M27 15h4v6.500h3.500M33 20l1.500 1.500L33 23"/>
<path d="M39.500 16.500h5V14.500l4 3.500-4 3.500v-2h-5z"/><path d="M54.500 13.500h4v5h2l-4 4-4-4h2z"/><path d="M64 21.500v-5l2-2.500h6.500v5l-2 2.500z"/>
<path d="M6.500 26l-2 3h3l-2 3.500 1-.3M5.500 32.500l-.8-1"/><path d="M15.500 27c4 0 7 2 7 7"/><path d="M27 34c1.500-9 3.500-9 5 0h2.500"/>
<path d="M45 26c-1.500 0-1.500 1-1.500 2s0 2-1 2c1 0 1 1 1 2s0 2 1.500 2"/><path d="M55 26c1.500 0 1.500 1 1.500 2s0 2 1 2c-1 0-1 1-1 2s0 2-1.500 2"/>
<path d="M68 25.500l1.300 3h3.200l-2.600 2 1 3.200-2.900-2-2.900 2 1-3.200-2.600-2h3.200z"/></g></svg>
<svg class="abs" style="left:671.0px;top:44.0px" width="17" height="18" viewBox="0 0 17 18"><rect x="1" y="1" width="6.500" height="6.500" fill="#fff" stroke="#8a8a8a" stroke-width=".9"/><rect x="4.500" y="4.500" width="8" height="8" fill="#e8c98f"/><rect x="9.500" y="9.500" width="6.500" height="6.500" fill="#fff" stroke="#8a8a8a" stroke-width=".9"/></svg>
<div class="abs nw" style="left:666.5px;top:64.5px;font-size:7.2px;line-height:10px;color:#3b3b3b;letter-spacing:-0.01px">Arrange</div>
<svg class="abs" style="left:677.5px;top:78.0px" width="4" height="3" viewBox="0 0 4 3"><path d="M0 .3h4L2 2.700z" fill="#8c8c8c"/></svg>
<svg class="abs" style="left:700.0px;top:44.0px" width="19" height="19" viewBox="0 0 19 19"><path d="M2 2h14v9c-2 3-5 5-9 5-3 0-5-2-5-5z" fill="#ececec" stroke="#c2c2c2" stroke-width=".9"/><path d="M8 14 16 5l1.500 1.500L10 15z" fill="#c2c2c2"/></svg>
<div class="abs nw" style="left:698.6px;top:64.0px;font-size:7.2px;line-height:10px;color:#b3b3b3;letter-spacing:0.01px">Quick</div>
<div class="abs nw" style="left:696.0px;top:74.0px;font-size:7.2px;line-height:10px;color:#b3b3b3;letter-spacing:-0.12px">Styles</div>
<svg class="abs" style="left:717.0px;top:78.5px" width="4" height="3" viewBox="0 0 4 3"><path d="M0 .3h4L2 2.700z" fill="#d6d6d6"/></svg>
<svg class="abs" style="left:725.0px;top:43.0px" width="10" height="10" viewBox="0 0 10 10"><path d="M2 5 5.500 1.500 9 5 5.500 8.500zM.5 9.500h9" fill="none" stroke="#c2c2c2" stroke-width=".9"/></svg>
<div class="abs nw" style="left:735.7px;top:43.5px;font-size:7.2px;line-height:10px;color:#b3b3b3;letter-spacing:-0.19px">Shape Fill</div>
<svg class="abs" style="left:769.0px;top:48.0px" width="4" height="3" viewBox="0 0 4 3"><path d="M0 .3h4L2 2.700z" fill="#d6d6d6"/></svg>
<svg class="abs" style="left:725.0px;top:57.5px" width="10" height="10" viewBox="0 0 10 10"><path d="M.5 9.500v-7h6M3 6.500 8.500 1l1 1L4 7.500z" fill="none" stroke="#c2c2c2" stroke-width=".9"/></svg>
<div class="abs nw" style="left:735.7px;top:57.5px;font-size:7.2px;line-height:10px;color:#b3b3b3;letter-spacing:-0.02px">Shape Outline</div>
<svg class="abs" style="left:784.0px;top:62.0px" width="4" height="3" viewBox="0 0 4 3"><path d="M0 .3h4L2 2.700z" fill="#d6d6d6"/></svg>
<svg class="abs" style="left:725.0px;top:72.0px" width="10" height="9" viewBox="0 0 10 9"><ellipse cx="5" cy="4" rx="4.300" ry="3.300" fill="#e4e4e4" stroke="#c2c2c2" stroke-width=".9"/><path d="M2 8.300h7" stroke="#c2c2c2"/></svg>
<div class="abs nw" style="left:735.7px;top:72.0px;font-size:7.2px;line-height:10px;color:#b3b3b3;letter-spacing:-0.19px">Shape Effects</div>
<svg class="abs" style="left:781.0px;top:76.5px" width="4" height="3" viewBox="0 0 4 3"><path d="M0 .3h4L2 2.700z" fill="#d6d6d6"/></svg>
<div class="abs nw" style="left:665.9px;top:85.9px;font-size:7.2px;line-height:10px;color:#444;letter-spacing:0.12px">Drawing</div>
<svg class="abs" style="left:788.0px;top:88.5px" width="5" height="5" viewBox="0 0 5 5"><path d="M.5.5h3M.5.5v3M1.500 1.500l3 3M4.500 2v2.500H2" fill="none" stroke="#b0b0b0" stroke-width=".7"/></svg>
<svg class="abs" style="left:802.5px;top:43.5px" width="9" height="9" viewBox="0 0 9 9"><circle cx="5.500" cy="3.500" r="2.700" fill="none" stroke="#555" stroke-width=".9"/><path d="M3.500 5.500.8 8.300" stroke="#555" stroke-width="1.100"/></svg>
<div class="abs nw" style="left:814.8px;top:43.5px;font-size:7.2px;line-height:10px;color:#3b3b3b;letter-spacing:-0.26px">Find</div>
<svg class="abs" style="left:802.5px;top:57.5px" width="10" height="10" viewBox="0 0 10 10"><g fill="none" stroke="#555" stroke-width=".9"><path d="M1 4V1h3.500v3zM5.500 9V6H9v3z"/><path d="M6.500 1.500C8 1.500 8.500 2.500 8.500 4M3.500 8.500C2 8.500 1.500 7.500 1.500 6"/></g></svg>
<div class="abs nw" style="left:814.8px;top:57.5px;font-size:7.2px;line-height:10px;color:#3b3b3b;letter-spacing:-0.30px">Replace</div>
<svg class="abs" style="left:846.0px;top:62.0px" width="4" height="3" viewBox="0 0 4 3"><path d="M0 .3h4L2 2.700z" fill="#777"/></svg>
<svg class="abs" style="left:804.5px;top:71.0px" width="7" height="11" viewBox="0 0 7 11"><path d="M1 .8v8l2-1.800 1.300 3 1-.5L4 6.700h2.500z" fill="#fff" stroke="#555" stroke-width=".8"/></svg>
<div class="abs nw" style="left:814.8px;top:72.0px;font-size:6.61px;line-height:10px;color:#3b3b3b;letter-spacing:-0.13px">Select</div>
<svg class="abs" style="left:835.5px;top:76.5px" width="4" height="3" viewBox="0 0 4 3"><path d="M0 .3h4L2 2.700z" fill="#777"/></svg>
<div class="abs nw" style="left:815.5px;top:85.9px;font-size:7.2px;line-height:10px;color:#444;letter-spacing:0.04px">Editing</div>
<svg class="abs" style="left:1165.5px;top:90.0px" width="7" height="4" viewBox="0 0 7 4"><path d="M.5 3.500 3.500.8l3 2.700" fill="none" stroke="#777" stroke-width=".9"/></svg>
<div class="abs" style="left:178.0px;top:96.0px;width:1.0px;height:527.0px;background:#cfcfcf"></div>
<div class="abs" style="left:166.5px;top:97.5px;width:9.0px;height:523.0px;background:#dcdadc"></div>
<div class="abs" style="left:166.5px;top:206.0px;width:9.0px;height:298.0px;background:#fdfdfd;border:1px solid #d4d4d4"></div>
<div class="abs" style="left:166.5px;top:97.5px;width:9.0px;height:9.0px;background:#fff;border:1px solid #c8c8c8"></div>
<svg class="abs" style="left:169.0px;top:101.0px" width="4" height="3" viewBox="0 0 4 3"><path d="M0 2.700h4L2 .3z" fill="#666"/></svg>
<div class="abs" style="left:166.5px;top:612.0px;width:9.0px;height:8.5px;background:#fff;border:1px solid #c8c8c8"></div>
<svg class="abs" style="left:169.0px;top:615.0px" width="4" height="3" viewBox="0 0 4 3"><path d="M0 .3h4L2 2.700z" fill="#666"/></svg>
<div class="abs nw" style="left:7.0px;top:105.0px;font-size:9px;line-height:13px;color:#666;">3</div>
<div class="abs" style="left:22px;top:108.5px;width:130.800px;height:74px;background:#1d1a2f;overflow:hidden"><div class="abs" style="left:0;top:0;width:526px;height:296px;transform:scale(.25);transform-origin:0 0"><div class="abs nw" style="left:24px;top:16px;font-size:26.0px;line-height:31.2px;color:#fff;font-family:'Liberation Serif',serif;letter-spacing:0.68px">Introduction</div><div class="abs" style="left:28px;top:60.0px;width:464px;font-size:11.80px;line-height:15.20px;color:#f4f3f8;font-family:'Liberation Serif',serif;font-weight:bold;">&bull; Fossil fuels such as coal, oil and gas are the largest contributor to climate change in the world and the contributors to 90 percent of all carbon dioxide emissions.</div><div class="abs" style="left:28px;top:100.4px;width:464px;font-size:11.80px;line-height:15.20px;color:#f4f3f8;font-family:'Liberation Serif',serif;font-weight:bold;">&bull; To avoid the worst impacts of climate change, emissions need to be reduced by half by 2030 and reach net-zero emissions by 2050.</div><div class="abs" style="left:28px;top:143.2px;width:464px;font-size:11.80px;line-height:15.20px;color:#f4f3f8;font-family:'Liberation Serif',serif;font-weight:bold;">&bull; This necessitates to end our reliance on fossil fuels and invest in using alternative sources of energy that are clean, affordable, sustainable, reliable, and accessible.</div><div class="abs" style="left:28px;top:184.4px;width:464px;font-size:11.80px;line-height:15.20px;color:#f4f3f8;font-family:'Liberation Serif',serif;font-weight:bold;">&bull; Renewable energy sources are available all around us and these are provided by the sun, wind, water, and waste. These are at least it is replenished by nature and there is no emission of greenhouse gas.</div><div class="abs" style="left:28px;top:241.2px;width:464px;font-size:11.80px;line-height:15.20px;color:#f4f3f8;font-family:'Liberation Serif',serif;font-weight:bold;">&bull; The International Renewable Energy Agency estimates that by 2050, 90 per cent of the global electricity should come from renewable energy.</div><div class="abs" style="left:24px;top:282.0px;width:56px;height:2.8px;background:#8a88a0;opacity:0.7"></div><div class="abs" style="left:120px;top:282.0px;width:48px;height:2.8px;background:#8a88a0;opacity:0.7"></div></div></div>
<div class="abs nw" style="left:7.0px;top:192.3px;font-size:9px;line-height:13px;color:#666;">4</div>
<div class="abs" style="left:22px;top:195.8px;width:130.800px;height:74px;background:#1d1a2f;overflow:hidden"><div class="abs" style="left:0;top:0;width:526px;height:296px;transform:scale(.25);transform-origin:0 0"><div class="abs nw" style="left:24px;top:20px;font-size:26.0px;line-height:31.2px;color:#fff;font-family:'Liberation Serif',serif;letter-spacing:1.06px">Case for Renewable Energy</div><div class="abs nw" style="left:24px;top:60px;font-size:17.14px;line-height:19.2px;color:#fff;font-family:'Liberation Serif',serif;letter-spacing:0.22px">Renewable energy is advocated for the following reasons</div><div class="abs nw" style="left:44px;top:89.2px;font-size:17.2px;line-height:20.6px;color:#fff;font-family:'Liberation Serif',serif;font-weight:bold;">&bull;Environment Sustainability</div><div class="abs nw" style="left:44px;top:118.80000000000001px;font-size:17.2px;line-height:20.6px;color:#fff;font-family:'Liberation Serif',serif;font-weight:bold;">&bull;Cheapest power option</div><div class="abs nw" style="left:44px;top:148.4px;font-size:17.2px;line-height:20.6px;color:#fff;font-family:'Liberation Serif',serif;font-weight:bold;">&bull;Better for health</div><div class="abs nw" style="left:44px;top:178.0px;font-size:17.2px;line-height:20.6px;color:#fff;font-family:'Liberation Serif',serif;font-weight:bold;">&bull;Creates job</div><div class="abs nw" style="left:44px;top:207.60000000000002px;font-size:17.2px;line-height:20.6px;color:#fff;font-family:'Liberation Serif',serif;font-weight:bold;">&bull;Economical</div><div class="abs" style="left:24px;top:282.0px;width:56px;height:2.8px;background:#8a88a0;opacity:0.7"></div><div class="abs" style="left:120px;top:282.0px;width:48px;height:2.8px;background:#8a88a0;opacity:0.7"></div></div></div>
<div class="abs nw" style="left:7.0px;top:280.3px;font-size:9px;line-height:13px;color:#666;">5</div>
<div class="abs" style="left:22px;top:283.8px;width:130.800px;height:74px;background:#1d1a2f;overflow:hidden"><div class="abs" style="left:0;top:0;width:526px;height:296px;transform:scale(.25);transform-origin:0 0"><div class="abs nw" style="left:24px;top:20px;font-size:26.0px;line-height:31.2px;color:#fff;font-family:'Liberation Serif',serif;letter-spacing:1.02px">Renewable Energy &ndash; Indian Situation</div><div class="abs" style="left:32px;top:58.0px;width:480px;font-size:10.40px;line-height:12.40px;color:#fff;font-family:'Liberation Sans',sans-serif;font-weight:bold;">&bull; India is now planning to have a rate of economic development that encourages carbon neutral approaches and relies more on clean energy technologies.</div><div class="abs" style="left:32px;top:100.0px;width:480px;font-size:10.40px;line-height:12.40px;color:#dddce6;font-family:'Liberation Sans',sans-serif;">&bull; India has pledged to achieve its zero emissions by 2070. Towards this, the government announced more ambitious targets for 2030, including installing 500 gigawatts of renewable energy capacity and reducing the emissions by 45%.</div><div class="abs" style="left:32px;top:160.0px;width:480px;font-size:10.40px;line-height:12.40px;color:#dddce6;font-family:'Liberation Sans',sans-serif;">&bull; India's national energy efficiency program has been successful in reducing energy use and emissions from buildings, transport, and major industries.</div><div class="abs" style="left:32px;top:204.0px;width:480px;font-size:10.40px;line-height:12.40px;color:#fff;font-family:'Liberation Sans',sans-serif;font-weight:bold;">&bull; Developing renewable energy can help India to a) increase its energy security, b) reduce the economic impact on environment at home, c) protect markets, and d) contribute to more balanced regional development.</div><div class="abs" style="left:24px;top:282.0px;width:56px;height:2.8px;background:#8a88a0;opacity:0.7"></div></div></div>
<div class="abs nw" style="left:7.0px;top:366.8px;font-size:9px;line-height:13px;color:#666;">6</div>
<div class="abs" style="left:22px;top:370.3px;width:130.800px;height:74px;background:#1d1a2f;overflow:hidden"><div class="abs" style="left:0;top:0;width:526px;height:296px;transform:scale(.25);transform-origin:0 0"><div class="abs nw" style="left:24px;top:14.0px;font-size:20px;line-height:24.0px;color:#fff;font-family:'Liberation Serif',serif;letter-spacing:0.64px">Renewable Energy Education &ndash; Indian Experience</div><div class="abs" style="left:32px;top:48.0px;width:216px;font-size:10.00px;line-height:11.60px;color:#fff;font-family:'Liberation Sans',sans-serif;font-weight:bold;">&bull; Technology upgradation effort is integrating renewable energy and technology into the curriculum of science education and ensures in its social-specific projects &ndash; domestic and trained in renewable energy.</div><div class="abs" style="left:32px;top:156.0px;width:224px;font-size:10.00px;line-height:11.60px;color:#fff;font-family:'Liberation Sans',sans-serif;font-weight:bold;">&bull; RE education is focused on Skills, Research and Managers and an independent energy sector for research. Few National Institutes of Technology, IITs have independent departments/ research centres for energy studies.</div><div class="abs" style="left:284px;top:58.0px;width:216px;font-size:9.20px;line-height:10.80px;color:#cfcedb;font-family:'Liberation Sans',sans-serif;text-align:center;">&bull; Few universities/ Institutes run with focus on industry</div><div class="abs" style="left:284px;top:94.0px;width:224px;font-size:10.00px;line-height:11.80px;color:#fff;font-family:'Liberation Sans',sans-serif;font-weight:bold;">&bull; Energy engineering fundamentals,<br>&bull; Numeric methods for energy<br>&nbsp;&nbsp;applications<br>&bull; Energy analysis, modelling &amp; control<br>&bull; Energy management<br>&bull; Energy economics<br>&bull; Electronics and environment<br>&bull; Electro-chemistry<br>&bull; Energy conversion etc.</div></div></div>
<div class="abs" style="left:19.7px;top:456.3px;width:136.0px;height:78.7px;border:1.500px solid #c9563b;background:#f6e3dc"></div>
<div class="abs nw" style="left:7.0px;top:455.5px;font-size:9px;line-height:13px;color:#c9563b;">7</div>
<div class="abs" style="left:22px;top:459.0px;width:130.800px;height:74px;background:#1d1a2f;overflow:hidden"><div class="abs" style="left:0;top:0;width:526px;height:296px;transform:scale(.25);transform-origin:0 0"><div class="abs nw" style="left:24px;top:16px;font-size:26.0px;line-height:31.2px;color:#fff;font-family:'Liberation Serif',serif;letter-spacing:1.25px">Course Curriculum</div><div class="abs" style="left:108px;top:54.0px;width:80px;font-size:10.40px;line-height:12.00px;color:#b8b5ca;font-family:'Liberation Sans',sans-serif;font-weight:bold;text-decoration:underline;white-space:nowrap;">P G Courses</div><div class="abs" style="left:336px;top:54.0px;width:120px;font-size:10.40px;line-height:12.00px;color:#b8b5ca;font-family:'Liberation Sans',sans-serif;font-weight:bold;text-decoration:underline;white-space:nowrap;">&bull; Doctoral Program</div><div class="abs" style="left:28px;top:76.8px;width:232px;font-size:9.80px;line-height:12.00px;color:#e4e3ec;font-family:'Liberation Serif',serif;white-space:nowrap;">&bull;&nbsp; Conventional Energy Systems,</div><div class="abs" style="left:28px;top:100.2px;width:232px;font-size:9.80px;line-height:12.00px;color:#e4e3ec;font-family:'Liberation Serif',serif;white-space:nowrap;">&bull;&nbsp; Decarbonisation and Energy System Transitions,</div><div class="abs" style="left:28px;top:123.6px;width:232px;font-size:9.80px;line-height:12.00px;color:#e4e3ec;font-family:'Liberation Serif',serif;white-space:nowrap;">&bull;&nbsp; Wind, Solar, and hydro energy</div><div class="abs" style="left:28px;top:147.0px;width:232px;font-size:9.80px;line-height:12.00px;color:#e4e3ec;font-family:'Liberation Serif',serif;white-space:nowrap;">&bull;&nbsp; Energy Technology</div><div class="abs" style="left:28px;top:170.4px;width:232px;font-size:9.80px;line-height:12.00px;color:#e4e3ec;font-family:'Liberation Serif',serif;white-space:nowrap;">&bull;&nbsp; Appraising Renewable Energy Projects</div><div class="abs" style="left:28px;top:193.8px;width:232px;font-size:9.80px;line-height:12.00px;color:#e4e3ec;font-family:'Liberation Serif',serif;white-space:nowrap;">&bull;&nbsp; Energy Economics and Policy</div><div class="abs" style="left:28px;top:217.2px;width:232px;font-size:9.80px;line-height:12.00px;color:#e4e3ec;font-family:'Liberation Serif',serif;white-space:nowrap;">&bull;&nbsp; Energy Management, Efficiency and Audit</div><div class="abs" style="left:28px;top:240.6px;width:232px;font-size:9.80px;line-height:12.00px;color:#e4e3ec;font-family:'Liberation Serif',serif;white-space:nowrap;">&bull;&nbsp; Social and Environmental Impact Assessment</div><div class="abs" style="left:266.0px;top:72.0px;width:240px;font-size:11.20px;line-height:15.60px;color:#fff;font-family:'Liberation Sans',sans-serif;font-weight:bold;">Doctoral research in renewable energy technology is done in the field of</div><div class="abs" style="left:268px;top:111.2px;width:248px;font-size:11.00px;line-height:13.60px;color:#fff;font-family:'Liberation Sans',sans-serif;font-weight:bold;white-space:nowrap;">&bull; Wind energy,</div><div class="abs" style="left:268px;top:137.0px;width:248px;font-size:11.00px;line-height:13.60px;color:#fff;font-family:'Liberation Sans',sans-serif;font-weight:bold;white-space:nowrap;">&bull; Solar structure,</div><div class="abs" style="left:268px;top:162.8px;width:248px;font-size:11.00px;line-height:13.60px;color:#fff;font-family:'Liberation Sans',sans-serif;font-weight:bold;white-space:nowrap;">&bull; Energy efficiency system</div><div class="abs" style="left:268px;top:188.6px;width:248px;font-size:11.00px;line-height:13.60px;color:#fff;font-family:'Liberation Sans',sans-serif;font-weight:bold;white-space:nowrap;">&bull; Environmental compliance,</div><div class="abs" style="left:268px;top:214.4px;width:248px;font-size:11.00px;line-height:13.60px;color:#fff;font-family:'Liberation Sans',sans-serif;font-weight:bold;white-space:nowrap;">&bull; Bio-mass characterization and other areas.</div><div class="abs" style="left:24px;top:282.0px;width:56px;height:2.8px;background:#8a88a0;opacity:0.7"></div><div class="abs" style="left:144px;top:282.0px;width:44px;height:2.8px;background:#8a88a0;opacity:0.7"></div></div></div>
<div class="abs nw" style="left:7.0px;top:542.9px;font-size:9px;line-height:13px;color:#666;">8</div>
<div class="abs" style="left:22px;top:546.4px;width:130.800px;height:74px;background:#1d1a2f;overflow:hidden"><div class="abs" style="left:0;top:0;width:526px;height:296px;transform:scale(.25);transform-origin:0 0"><div class="abs nw" style="left:24px;top:22.0px;font-size:27.86px;line-height:29.8px;color:#fff;font-family:'Liberation Serif',serif;letter-spacing:0.29px">Dedicated Institutes offering short term<br>courses</div><div class="abs" style="left:28px;top:92.0px;width:448px;font-size:14.80px;line-height:22.80px;color:#fff;font-family:'Liberation Sans',sans-serif;font-weight:bold;white-space:nowrap;">&bull; Short term courses are done by few specialised institutions in<br>&nbsp; India. These are</div><div class="abs" style="left:40px;top:147.6px;width:464px;font-size:14.80px;line-height:16.00px;color:#fff;font-family:'Liberation Sans',sans-serif;font-weight:bold;">&bull;National Institute of Solar Energy, Gurgaon,</div><div class="abs" style="left:40px;top:175.4px;width:464px;font-size:14.80px;line-height:22.80px;color:#fff;font-family:'Liberation Sans',sans-serif;font-weight:bold;white-space:nowrap;">&bull;Sardar Swaran Singh National Institute of Bio energy, Punjab,<br>&nbsp; and</div><div class="abs" style="left:40px;top:232.8px;width:464px;font-size:14.80px;line-height:16.00px;color:#fff;font-family:'Liberation Sans',sans-serif;font-weight:bold;">&bull;National Institute of Wind Energy, Chennai.</div><div class="abs" style="left:24px;top:282.0px;width:56px;height:2.8px;background:#8a88a0;opacity:0.7"></div><div class="abs" style="left:144px;top:282.0px;width:44px;height:2.8px;background:#8a88a0;opacity:0.7"></div></div></div>
<div class="abs" style="left:1167.0px;top:96.0px;width:10.0px;height:527.0px;background:#dbdbdd"></div>
<div class="abs" style="left:1167.5px;top:390.0px;width:9.0px;height:46.0px;background:#fdfdfd;border:1px solid #d0d0d0"></div>
<div class="abs" style="left:1167.5px;top:97.5px;width:9.0px;height:9.0px;background:#fff;border:1px solid #c8c8c8"></div>
<svg class="abs" style="left:1170.0px;top:101.0px" width="4" height="3" viewBox="0 0 4 3"><path d="M0 2.700h4L2 .3z" fill="#666"/></svg>
<div class="abs" style="left:1167.5px;top:578.0px;width:9.0px;height:9.0px;background:#fff;border:1px solid #c8c8c8"></div>
<svg class="abs" style="left:1170.0px;top:581.5px" width="4" height="3" viewBox="0 0 4 3"><path d="M0 .3h4L2 2.700z" fill="#666"/></svg>
<svg class="abs" style="left:1169.5px;top:590.0px" width="5" height="6" viewBox="0 0 5 6"><path d="M0 2.500 2.500 0 5 2.500zM0 3.500h5L2.500 6z" fill="#666"/></svg>
<svg class="abs" style="left:1169.5px;top:601.0px" width="5" height="6" viewBox="0 0 5 6"><path d="M0 2.500 2.500 0 5 2.500zM0 3.500h5L2.500 6z" fill="#666"/></svg>
<div id="slide" class="abs">
    <div class="abs nw" id="stitle" style="left:41px;top:11.7px;font-family:'Liberation Serif',serif;font-size:48.75px;line-height:56px;color:#fff;transform-origin:0 100%;transform:scaleY(1.045);-webkit-text-stroke:.35px #fff">Course Curriculum</div>
    <div class="abs nw" style="left:185.5px;top:78px;font-weight:bold;font-size:18px;line-height:22px;color:#b0adc4;-webkit-text-stroke:.3px #b0adc4;text-decoration:underline;text-decoration-thickness:1px;text-underline-offset:1.5px;text-decoration-skip-ink:none">P G Courses</div>
    <div class="abs nw" style="left:564px;top:78px;font-size:17.5px;line-height:22px;color:#b0adc4">&bull;</div>
    <div class="abs nw" style="left:581px;top:78px;font-weight:bold;font-size:18px;letter-spacing:.42px;line-height:22px;color:#b0adc4;-webkit-text-stroke:.3px #b0adc4;text-decoration:underline;text-decoration-thickness:1px;text-underline-offset:1.5px;text-decoration-skip-ink:none">Doctoral Program</div>
    <svg class="abs" style="left:14px;top:396px" width="64" height="62" viewBox="14 396 64 62"><defs><filter id="tb" x="-20%" y="-20%" width="140%" height="140%"><feGaussianBlur stdDeviation="0.9"/></filter><linearGradient id="tg" x1="0" y1="0" x2="1" y2="1"><stop offset="0" stop-color="#2c2950"/><stop offset="1" stop-color="#2a274c"/></linearGradient></defs><g filter="url(#tb)"><path d="M23.500 419.200 63.500 407 52.200 446.500 38 444.800z" fill="url(#tg)"/><path d="M63.500 407 52.200 446.500 41 421z" fill="#423e73" opacity=".75"/></g></svg>
    <ul id="lcol" class="abs" style="left:41.5px;top:118px;list-style:none;font-family:'Liberation Serif',serif;font-size:16.7px;color:#fff;-webkit-text-stroke:.2px #fff">
      <li>Conventional Energy Systems,</li>
      <li>Decarbonisation and Energy System Transitions,</li>
      <li>Wind, Solar, and hydro energy</li>
      <li>Energy Technology</li>
      <li>Appraising Renewable Energy Projects</li>
      <li>Energy Economics and Policy</li>
      <li>Energy Management, Efficiency and Audit</li>
      <li>Social and Environmental Impact Assessment</li>
      <li class="dk">Stakeholder Engagement &amp; Communication</li>
    </ul>
    <div class="abs nw" style="left:453.6px;top:117.6px;font-size:18.8px;line-height:27px;color:#fff;letter-spacing:0.02px">Doctoral research in renewable energy</div>
    <div class="abs nw" style="left:453.6px;top:144.6px;font-size:18.8px;line-height:27px;color:#fff;letter-spacing:0.10px">technology is done in the field of</div>
    <ul id="rcol" class="abs" style="left:453px;top:189.2px;list-style:none;font-size:18.6px;color:#fff">
      <li style="letter-spacing:0.11px">Wind energy,</li>
      <li style="letter-spacing:0.14px">Solar structure,</li>
      <li style="letter-spacing:-0.24px">Energy efficiency system</li>
      <li style="letter-spacing:-0.11px">Environmental compliance,</li>
      <li style="letter-spacing:-0.08px">Bio-mass characterization and other areas.</li>
    </ul>
    <div class="abs nw ft" style="left:41px;top:475.7px">Tuesday, February 2, 20XX</div>
    <div class="abs nw ft" style="left:245px;top:475.7px">Sample Footer Text</div>
    <div class="abs nw ft" style="left:845.5px;top:475.5px;font-size:9px">7</div>
    <div class="abs" style="left:809px;top:23.5px;width:27px;height:27px;border-radius:50%;background:radial-gradient(circle at 63% 36%,#1b1a34 0,#1c1c37 54%,#30355a 67%,#66708f 80%,#a9b0c8 97%);box-shadow:inset 0 0 1.500px 0.500px rgba(130,135,170,.45);filter:blur(.55px)"></div>
    <svg class="abs" style="left:564px;top:423px" width="9" height="14" viewBox="0 0 9 14"><path d="M1 1v10l2.3-2.2 1.6 3.6 1.5-.7-1.6-3.5H8z" fill="#fff" stroke="#111" stroke-width=".7"/></svg>
  </div>
  <div id="status" class="abs"></div>
<div class="abs nw" style="left:5.4px;top:626.0px;font-size:7px;line-height:10px;color:#444;letter-spacing:-0.00px">Slide 7 of 10</div>
<svg class="abs" style="left:55.0px;top:626.0px" width="9" height="8" viewBox="0 0 9 8"><g fill="none" stroke="#666" stroke-width=".8"><rect x=".5" y=".5" width="6" height="7"/><path d="M4 6 8.500 1.500"/></g></svg>
<div class="abs nw" style="left:75.0px;top:626.0px;font-size:7px;line-height:10px;color:#444;letter-spacing:-0.05px">English (United States)</div>
<svg class="abs" style="left:155.0px;top:625.5px" width="10" height="10" viewBox="0 0 10 10"><g fill="none" stroke="#555" stroke-width=".9"><circle cx="4" cy="2" r="1.300"/><path d="M1 4.500h6M4 4.500v3M4 7.500 2.500 9.500M4 7.500l1.500 2M6 6l3 3M9 6 6 9"/></g></svg>
<div class="abs nw" style="left:167.0px;top:626.0px;font-size:7px;line-height:10px;color:#444;letter-spacing:-0.04px">Accessibility: Investigate</div>
<svg class="abs" style="left:857.5px;top:626.5px" width="8" height="7" viewBox="0 0 8 7"><g fill="none" stroke="#555" stroke-width=".8"><path d="M0 3.500h8M1.500 5.500h5M4 0v2M2.500 1 4 2.500 5.500 1"/></g></svg>
<div class="abs nw" style="left:868.0px;top:626.0px;font-size:7px;line-height:10px;color:#444;letter-spacing:0.05px">Notes</div>
<svg class="abs" style="left:898.5px;top:626.0px" width="9" height="8" viewBox="0 0 9 8"><path d="M.5.5h8v5H4l-2 2v-2H.5z" fill="#444"/></svg>
<div class="abs nw" style="left:909.5px;top:626.0px;font-size:7px;line-height:10px;color:#444;letter-spacing:-0.19px">Comments</div>
<div class="abs" style="left:954.0px;top:623.5px;width:24.0px;height:13.5px;background:#c9c9c9"></div>
<svg class="abs" style="left:961.5px;top:626.5px" width="9" height="7" viewBox="0 0 9 7"><g fill="none" stroke="#555" stroke-width=".8"><rect x=".5" y=".5" width="8" height="6"/><path d="M3 2.500h4M3 4.500h4"/></g></svg>
<svg class="abs" style="left:986.0px;top:626.5px" width="9" height="7" viewBox="0 0 9 7"><g fill="none" stroke="#666" stroke-width=".8"><rect x=".5" y=".5" width="3" height="2.500"/><rect x="5" y=".5" width="3" height="2.500"/><rect x=".5" y="4" width="3" height="2.500"/><rect x="5" y="4" width="3" height="2.500"/></g></svg>
<svg class="abs" style="left:1010.5px;top:626.5px" width="9" height="7" viewBox="0 0 9 7"><g fill="none" stroke="#666" stroke-width=".8"><path d="M.5.5h3.500v6H.5zM5 .5h3.500v6H5zM4 1.500h1M4 3h1M4 4.500h1"/></g></svg>
<svg class="abs" style="left:1035.0px;top:626.0px" width="9" height="8" viewBox="0 0 9 8"><g fill="none" stroke="#666" stroke-width=".8"><path d="M.5.5h8M1 .5v4.500h7V.5M4.500 5v2.500M3 7.500h3"/></g></svg>
<svg class="abs" style="left:1055.0px;top:630.0px" width="5" height="1" viewBox="0 0 5 1"><path d="M0 .5h5" stroke="#555" stroke-width=".9"/></svg>
<div class="abs" style="left:1064.0px;top:629.8px;width:61.0px;height:1.0px;background:#8a8a8a"></div>
<div class="abs" style="left:1094.5px;top:626.5px;width:3.0px;height:7.5px;background:#666"></div>
<svg class="abs" style="left:1128.0px;top:627.5px" width="5" height="5" viewBox="0 0 5 5"><path d="M0 2.500h5M2.500 0v5" stroke="#555" stroke-width=".9"/></svg>
<div class="abs nw" style="left:1140.5px;top:626.0px;font-size:7px;line-height:10px;color:#444;letter-spacing:-0.30px">114%</div>
<svg class="abs" style="left:1165.0px;top:626.5px" width="8" height="8" viewBox="0 0 8 8"><g fill="none" stroke="#666" stroke-width=".8"><rect x=".5" y=".5" width="7" height="7"/><path d="M2 2l1.300 1.300M6 2 4.700 3.300M2 6l1.300-1.300M6 6 4.700 4.700"/></g></svg>
</div>
<div class="abs" style="left:7.500px;top:108.500px;width:15px;height:17px;border-radius:4px;background:#222"></div>
<svg class="abs" style="left:9.5px;top:110.5px" width="11" height="13" viewBox="0 0 11 13"><path d="M5.500.5 10.500 2.300v4c0 3-2.200 5-5 6.200C2.700 11.300.5 9.300.5 6.300v-4z" fill="#2fbf5b"/><path d="M3 6.300l1.900 1.900L8.200 4.700" fill="none" stroke="#fff" stroke-width="1.300"/></svg>
<div class="abs" style="left:25px;top:107.800px;width:108px;height:18.700px;border-radius:3px;background:rgba(40,20,14,.34)"></div>
<div class="abs nw" style="left:37.5px;top:110.7px;font-size:9.5px;line-height:13px;color:#fff;letter-spacing:-0.26px">Original Sound: Off</div>
<svg class="abs" style="left:125.0px;top:115.5px" width="6" height="3.5" viewBox="0 0 6 3.5"><path d="M0 0h6L3 3.500z" fill="#e0d2cd"/></svg>
<div class="abs" style="left:140px;top:107.800px;width:133px;height:18.700px;border-radius:3px;background:#7b2c17;overflow:hidden"><div class="abs" style="left:94px;top:0;width:39px;height:19px;background:#66230f"></div></div>
<svg class="abs" style="left:148.0px;top:111.5px" width="15" height="11" viewBox="0 0 15 11"><path d="M3.800 10.300a3 3 0 0 1-.4-6A4.300 4.300 0 0 1 11.700 3.600a3.400 3.400 0 0 1 .2 6.700z" fill="#f0dcd6"/><circle cx="7.500" cy="6.800" r="1.700" fill="#a3321f"/></svg>
<div class="abs nw" style="left:170.0px;top:110.5px;font-size:9.5px;line-height:13px;color:#fff;letter-spacing:-0.41px">Recording...</div>
<svg class="abs" style="left:241.5px;top:113.5px" width="6" height="7" viewBox="0 0 6 7"><rect x=".3" width="1.900" height="7" fill="#fff"/><rect x="3.800" width="1.900" height="7" fill="#fff"/></svg>
<svg class="abs" style="left:261.3px;top:113.8px" width="6" height="6" viewBox="0 0 6 6"><rect width="5.500" height="5.500" fill="#fff"/></svg>
<!-- ===== ZOOM TOOLBAR ===== -->
<div id="ztb" class="abs">
<svg class="abs" style="left:28.0px;top:4.0px" width="12" height="17" viewBox="0 0 12 17"><rect x="3.500" y=".5" width="5" height="9.500" rx="2.500" fill="#c2c2c2"/><path d="M1.300 7.500a4.700 4.700 0 0 0 9.400 0M6 12.300v3M3.300 15.800h5.400" fill="none" stroke="#c2c2c2" stroke-width="1.300"/></svg>
<div class="abs nw" style="left:24.0px;top:23.5px;font-size:8.7px;line-height:13px;color:#c2c2c2;letter-spacing:0.56px">Mute</div>
<svg class="abs" style="left:55.0px;top:9.5px" width="7" height="5" viewBox="0 0 7 5"><path d="M.8 4.200 3.500 1.300l2.700 2.900" fill="none" stroke="#bdbdbd" stroke-width="1.200"/></svg>
<svg class="abs" style="left:95.0px;top:6.0px" width="18" height="12" viewBox="0 0 18 12"><rect x=".5" y="1" width="11.500" height="10" rx="2.200" fill="#c2c2c2"/><path d="M13 4.500 17 2v8l-4-2.500z" fill="#c2c2c2"/></svg>
<div class="abs nw" style="left:81.5px;top:23.5px;font-size:8.7px;line-height:13px;color:#c2c2c2;letter-spacing:0.24px">Stop Video</div>
<svg class="abs" style="left:128.5px;top:9.5px" width="7" height="5" viewBox="0 0 7 5"><path d="M.8 4.200 3.500 1.300l2.700 2.900" fill="none" stroke="#bdbdbd" stroke-width="1.200"/></svg>
<svg class="abs" style="left:291.0px;top:4.0px" width="14" height="16" viewBox="0 0 14 16"><path d="M7 .8 12.800 3v4.800c0 3.500-2.500 6-5.800 7.400C3.700 13.800 1.200 11.300 1.200 7.800V3z" fill="none" stroke="#c2c2c2" stroke-width="1.400"/><path d="M7 2.300V13.600C4.500 12.400 2.600 10.500 2.600 7.800H7z" fill="#c2c2c2"/><path d="M7 7.800h4.400V4L7 2.300z" fill="#c2c2c2"/></svg>
<div class="abs nw" style="left:281.5px;top:23.5px;font-size:8.7px;line-height:13px;color:#c2c2c2;letter-spacing:0.09px">Security</div>
<svg class="abs" style="left:366.0px;top:5.0px" width="20" height="14" viewBox="0 0 20 14"><circle cx="7" cy="3.800" r="3.200" fill="#c2c2c2"/><path d="M.8 13.500c0-4 2.700-5.500 6.200-5.500s6.200 1.500 6.200 5.500z" fill="#c2c2c2"/><circle cx="14.800" cy="4.600" r="2.500" fill="#c2c2c2"/><path d="M14 8.300c3-.5 5.500 1 5.500 5.200h-5c0-2-.2-3.800-1.700-5z" fill="#c2c2c2"/></svg>
<div class="abs nw" style="left:389.5px;top:4.0px;font-size:8.5px;line-height:12px;color:#c2c2c2;letter-spacing:-.6px;">11</div>
<div class="abs nw" style="left:353.5px;top:23.5px;font-size:8.7px;line-height:13px;color:#c2c2c2;letter-spacing:0.10px">Participants</div>
<svg class="abs" style="left:412.5px;top:9.5px" width="7" height="5" viewBox="0 0 7 5"><path d="M.8 4.200 3.500 1.300l2.700 2.900" fill="none" stroke="#bdbdbd" stroke-width="1.200"/></svg>
<svg class="abs" style="left:448.0px;top:5.0px" width="15" height="14" viewBox="0 0 15 14"><rect x=".5" y="6.500" width="3.600" height="7" rx=".6" fill="#c2c2c2"/><rect x="5.700" y=".5" width="3.600" height="13" rx=".6" fill="#c2c2c2"/><rect x="10.900" y="4" width="3.600" height="9.500" rx=".6" fill="#c2c2c2"/></svg>
<div class="abs nw" style="left:445.0px;top:23.5px;font-size:8.7px;line-height:13px;color:#c2c2c2;letter-spacing:0.04px">Polls</div>
<svg class="abs" style="left:510.5px;top:5.0px" width="17" height="15" viewBox="0 0 17 15"><path d="M3 .8h11a2.200 2.200 0 0 1 2.200 2.200v5.500a2.200 2.200 0 0 1-2.200 2.200H8.500L4.500 14v-3.300H3A2.200 2.200 0 0 1 .8 8.500V3A2.200 2.200 0 0 1 3 .8z" fill="#c2c2c2"/></svg>
<div class="abs nw" style="left:510.0px;top:23.5px;font-size:8.7px;line-height:13px;color:#c2c2c2;letter-spacing:-0.29px">Chat</div>
<svg class="abs" style="left:540.0px;top:9.5px" width="7" height="5" viewBox="0 0 7 5"><path d="M.8 4.200 3.500 1.300l2.700 2.900" fill="none" stroke="#bdbdbd" stroke-width="1.200"/></svg>
<svg class="abs" style="left:580.0px;top:6.0px" width="19" height="14" viewBox="0 0 19 14"><rect width="19" height="14" rx="2.500" fill="#23d160"/><path d="M9.500 3 6.200 6.300h2.300v4.200h2V6.300h2.300z" fill="#11331d"/></svg>
<div class="abs nw" style="left:563.5px;top:23.5px;font-size:8.7px;line-height:13px;color:#23d160;letter-spacing:-0.19px">Share Screen</div>
<svg class="abs" style="left:614.0px;top:9.5px" width="7" height="5" viewBox="0 0 7 5"><path d="M.8 4.200 3.500 1.300l2.700 2.900" fill="none" stroke="#bdbdbd" stroke-width="1.200"/></svg>
<svg class="abs" style="left:660.0px;top:4.5px" width="34" height="15" viewBox="0 0 34 15"><rect x=".5" y=".5" width="15" height="14" rx="2.500" fill="#c2c2c2"/><rect x="5" y="4" width="2" height="7" fill="#1a1a1a"/><rect x="9" y="4" width="2" height="7" fill="#1a1a1a"/><rect x="18.500" y=".5" width="15" height="14" rx="2.500" fill="#c2c2c2"/><rect x="23" y="4.500" width="6" height="6" fill="#1a1a1a"/></svg>
<div class="abs nw" style="left:632.5px;top:23.5px;font-size:8.7px;line-height:13px;color:#d4d4d4;letter-spacing:0.03px">Pause/Stop Recording</div>
<svg class="abs" style="left:757.5px;top:4.5px" width="15" height="15" viewBox="0 0 15 15"><rect x=".5" y=".5" width="6.300" height="6.300" rx="1" fill="#c2c2c2"/><rect x="8.200" y=".5" width="6.300" height="6.300" rx="1" fill="#c2c2c2"/><rect x=".5" y="8.200" width="6.300" height="6.300" rx="1" fill="#c2c2c2"/><rect x="8.200" y="8.200" width="6.300" height="6.300" rx="1" fill="#c2c2c2"/></svg>
<div class="abs nw" style="left:732.5px;top:23.5px;font-size:8.7px;line-height:13px;color:#c2c2c2;letter-spacing:0.06px">Breakout Rooms</div>
<svg class="abs" style="left:826.5px;top:3.5px" width="17" height="17" viewBox="0 0 17 17"><circle cx="7.500" cy="9.500" r="6.500" fill="#c2c2c2"/><circle cx="5.300" cy="8" r="1" fill="#1a1a1a"/><circle cx="9.700" cy="8" r="1" fill="#1a1a1a"/><path d="M4.300 11c1.600 2.300 4.800 2.300 6.400 0" fill="none" stroke="#1a1a1a" stroke-width="1.100"/><path d="M14 .5v5M11.500 3h5" stroke="#c2c2c2" stroke-width="1.300"/></svg>
<div class="abs nw" style="left:814.5px;top:23.5px;font-size:8.7px;line-height:13px;color:#c2c2c2;letter-spacing:-0.08px">Reactions</div>
<svg class="abs" style="left:852.0px;top:9.5px" width="7" height="5" viewBox="0 0 7 5"><path d="M.8 4.200 3.500 1.300l2.700 2.900" fill="none" stroke="#bdbdbd" stroke-width="1.200"/></svg>
<svg class="abs" style="left:892.0px;top:5.5px" width="16" height="13" viewBox="0 0 16 13"><rect x=".8" y=".8" width="14.400" height="10" rx="1.800" fill="none" stroke="#c2c2c2" stroke-width="1.500"/><rect x="7" y="8.500" width="7" height="4" rx="1" fill="#1a1a1a"/><path d="M8 12.200h5.500" stroke="#c2c2c2" stroke-width="1.500"/></svg>
<div class="abs nw" style="left:875.0px;top:23.5px;font-size:8.7px;line-height:13px;color:#c2c2c2;letter-spacing:0.27px">Whiteboards</div>
<svg class="abs" style="left:959.5px;top:10.5px" width="16" height="4" viewBox="0 0 16 4"><circle cx="2" cy="2" r="1.500" fill="#c2c2c2"/><circle cx="8" cy="2" r="1.500" fill="#c2c2c2"/><circle cx="14" cy="2" r="1.500" fill="#c2c2c2"/></svg>
<div class="abs nw" style="left:958.5px;top:23.5px;font-size:8.7px;line-height:13px;color:#c2c2c2;letter-spacing:-0.27px">More</div>
<div class="abs" style="left:1145px;top:9.5px;width:46px;height:20.500px;border-radius:5px;background:#cb272d"></div>
<div class="abs nw" style="left:1160.0px;top:14.0px;font-size:8.5px;line-height:12px;color:#fff;font-weight:bold;letter-spacing:-0.53px">End</div>
</div>
<div id="pp" class="abs">
  <div class="abs" style="left:0;top:113px;width:240px;height:305px;background:linear-gradient(#fef6f4,#fdf4f2 85%,#fefaf9)"></div>
  <div class="abs nw" style="left:0;width:240px;top:25.800px;text-align:center;font-size:10px;letter-spacing:-.1px;font-weight:bold;line-height:16px;color:#222">Participants (11)</div>
  <svg class="abs" style="left:13px;top:30px" width="10" height="7" viewBox="0 0 10 7"><path d="M1.500 1.500 5 5l3.500-3.500" fill="none" stroke="#555" stroke-width="1.100"/></svg>
  <svg class="abs" style="left:148px;top:0" width="90" height="16" viewBox="0 0 90 16"><g fill="none" stroke="#222" stroke-width="1"><path d="M1 7.500h9"/><path d="M34.500 5.500h6v6h-6zM36.500 5.500v-2h6v6h-2"/><path d="M69 3.500l8 8M77 3.500l-8 8"/></g></svg>
  <div class="abs" style="left:14px;top:57px;width:213px;height:23px;border:1px solid #9b9b9b;border-radius:6px;background:#fff"></div>
  <svg class="abs" style="left:22px;top:63px" width="11" height="11" viewBox="0 0 11 11"><circle cx="4.500" cy="4.500" r="3.300" fill="none" stroke="#666" stroke-width="1"/><path d="M7 7l3 3" stroke="#666" stroke-width="1"/></svg>
  <div class="abs nw" style="left:34.500px;top:60.400px;font-size:9.900px;line-height:16px;color:#5a5a5a">Find a participant</div>
  <div class="abs row" style="top:82.0px"><div class="abs av" style="background:#b93b2d">MT</div><div class="abs nm" style="letter-spacing:-0.26px">MDIS Tashkent (Host, me)</div><svg class="abs" style="left:177px;top:10px" width="14" height="11" viewBox="0 0 14 11"><path d="M3.500 9.500a2.500 2.500 0 0 1-.3-5 3.600 3.600 0 0 1 7-.6 2.900 2.900 0 0 1 .3 5.600z" fill="none" stroke="#8a8a94" stroke-width="1"/><circle cx="7" cy="6.300" r="1.300" fill="#aaa"/></svg><svg class="abs" style="left:198px;top:8px" width="11" height="15" viewBox="0 0 11 15"><g fill="none" stroke="#8a8a94" stroke-width="1"><rect x="3.500" y="1.500" width="4" height="7" rx="2" /><path d="M1.500 7a4 4 0 0 0 8 0M5.500 11v2.500M3.500 13.500h4"/></g></svg><svg class="abs" style="left:214px;top:10px" width="15" height="11" viewBox="0 0 15 11"><g fill="none" stroke="#8a8a94" stroke-width="1"><rect x="1" y="1.500" width="9" height="8" rx="1.500"/><path d="M10 4.500 13.500 2.500v6L10 6.500z"/></g></svg></div>
  <div class="abs row" style="top:112.75px"><div class="abs av" style="background:#2e80b6">PK</div><div class="abs nm" style="letter-spacing:-0.21px">Prof Ka...&nbsp; (Co-host, guest)</div><svg class="abs" style="left:161px;top:11px" width="13" height="9" viewBox="0 0 13 9"><rect width="13" height="9" rx="1.500" fill="#1fa83c"/><path d="M6.500 2 4 4.500h1.700V7h1.600V4.500H9z" fill="#fff"/></svg><svg class="abs" style="left:177px;top:10px" width="14" height="11" viewBox="0 0 14 11"><path d="M3.500 9.500a2.500 2.500 0 0 1-.3-5 3.600 3.600 0 0 1 7-.6 2.900 2.900 0 0 1 .3 5.600z" fill="none" stroke="#8a8a94" stroke-width="1"/><circle cx="7" cy="6.300" r="1.500" fill="#d9414e"/></svg><svg class="abs" style="left:198px;top:8px" width="11" height="15" viewBox="0 0 11 15"><g fill="none" stroke="#8a8a94" stroke-width="1"><rect x="3.500" y="1.500" width="4" height="7" rx="2" fill="#8a8a94"/><path d="M1.500 7a4 4 0 0 0 8 0M5.500 11v2.500M3.500 13.500h4"/></g></svg><svg class="abs" style="left:214px;top:10px" width="15" height="11" viewBox="0 0 15 11"><g fill="none" stroke="#8a8a94" stroke-width="1"><rect x="1" y="1.500" width="9" height="8" rx="1.500"/><path d="M10 4.500 13.500 2.500v6L10 6.500z"/></g></svg></div>
  <div class="abs row" style="top:143.5px"><div class="abs av" style="background:#2f3d55">80</div><div class="abs nm" style="letter-spacing:-0.25px">862 0524 0504 (Guest)</div><svg class="abs" style="left:214px;top:8px" width="13" height="15" viewBox="0 0 13 15"><g fill="none" stroke="#d9737c" stroke-width="1"><rect x="4.5" y="1.5" width="4" height="7" rx="2"/><path d="M2.5 7a4 4 0 0 0 8 0M6.5 11v2.5M4.5 13.5h4"/><path d="M11.5 1 1.5 13.5" stroke="#d94f5c" stroke-width="1.1"/></g></svg></div>
  <div class="abs row" style="top:174.25px"><div class="abs av" style="background:#2f3d55">AA</div><div class="abs nm" style="letter-spacing:-0.11px">Abdulbosit Akhmadov (Guest)</div><svg class="abs" style="left:197px;top:8px" width="13" height="15" viewBox="0 0 13 15"><g fill="none" stroke="#d9737c" stroke-width="1"><rect x="4.5" y="1.5" width="4" height="7" rx="2"/><path d="M2.5 7a4 4 0 0 0 8 0M6.5 11v2.5M4.5 13.5h4"/><path d="M11.5 1 1.5 13.5" stroke="#d94f5c" stroke-width="1.1"/></g></svg><svg class="abs" style="left:214px;top:9px" width="16" height="13" viewBox="0 0 16 13"><g fill="none" stroke="#d9737c" stroke-width="1"><rect x="1.5" y="2.5" width="9" height="8" rx="1.5"/><path d="M10.5 5.5 14 3.5v6l-3.500-2z"/><path d="M13.500.8 1 12.200" stroke="#d94f5c" stroke-width="1.1"/></g></svg></div>
  <div class="abs row" style="top:205.0px"><div class="abs av" style="background:#8f40b1">AA</div><div class="abs nm" style="letter-spacing:-0.29px">Azizova Aziza (Guest)</div><svg class="abs" style="left:197px;top:8px" width="13" height="15" viewBox="0 0 13 15"><g fill="none" stroke="#d9737c" stroke-width="1"><rect x="4.5" y="1.5" width="4" height="7" rx="2"/><path d="M2.5 7a4 4 0 0 0 8 0M6.5 11v2.5M4.5 13.5h4"/><path d="M11.5 1 1.5 13.5" stroke="#d94f5c" stroke-width="1.1"/></g></svg><svg class="abs" style="left:214px;top:9px" width="16" height="13" viewBox="0 0 16 13"><g fill="none" stroke="#d9737c" stroke-width="1"><rect x="1.5" y="2.5" width="9" height="8" rx="1.5"/><path d="M10.5 5.5 14 3.5v6l-3.500-2z"/><path d="M13.500.8 1 12.200" stroke="#d94f5c" stroke-width="1.1"/></g></svg></div>
  <div class="abs row" style="top:235.75px"><div class="abs av" style="background:#2e80b6">CS</div><div class="abs nm" style="letter-spacing:-0.31px">Charos Suyunova (Guest)</div><svg class="abs" style="left:197px;top:8px" width="13" height="15" viewBox="0 0 13 15"><g fill="none" stroke="#d9737c" stroke-width="1"><rect x="4.5" y="1.5" width="4" height="7" rx="2"/><path d="M2.5 7a4 4 0 0 0 8 0M6.5 11v2.5M4.5 13.5h4"/><path d="M11.5 1 1.5 13.5" stroke="#d94f5c" stroke-width="1.1"/></g></svg><svg class="abs" style="left:214px;top:9px" width="16" height="13" viewBox="0 0 16 13"><g fill="none" stroke="#d9737c" stroke-width="1"><rect x="1.5" y="2.5" width="9" height="8" rx="1.5"/><path d="M10.5 5.5 14 3.5v6l-3.500-2z"/><path d="M13.500.8 1 12.200" stroke="#d94f5c" stroke-width="1.1"/></g></svg></div>
  <div class="abs row" style="top:266.5px"><div class="abs av" style="background:#8f40b1">MU</div><div class="abs nm" style="letter-spacing:-0.09px">Madinabonu Utkirova (Guest)</div><svg class="abs" style="left:197px;top:8px" width="13" height="15" viewBox="0 0 13 15"><g fill="none" stroke="#d9737c" stroke-width="1"><rect x="4.5" y="1.5" width="4" height="7" rx="2"/><path d="M2.5 7a4 4 0 0 0 8 0M6.5 11v2.5M4.5 13.5h4"/><path d="M11.5 1 1.5 13.5" stroke="#d94f5c" stroke-width="1.1"/></g></svg><svg class="abs" style="left:214px;top:9px" width="16" height="13" viewBox="0 0 16 13"><g fill="none" stroke="#d9737c" stroke-width="1"><rect x="1.5" y="2.5" width="9" height="8" rx="1.5"/><path d="M10.5 5.5 14 3.5v6l-3.500-2z"/><path d="M13.500.8 1 12.200" stroke="#d94f5c" stroke-width="1.1"/></g></svg></div>
  <div class="abs row" style="top:297.25px"><div class="abs av" style="background:#2f3d55">MI</div><div class="abs nm" style="letter-spacing:-0.12px">Mirzakhmedov Ilkhomjon (Guest)</div><svg class="abs" style="left:197px;top:8px" width="13" height="15" viewBox="0 0 13 15"><g fill="none" stroke="#d9737c" stroke-width="1"><rect x="4.5" y="1.5" width="4" height="7" rx="2"/><path d="M2.5 7a4 4 0 0 0 8 0M6.5 11v2.5M4.5 13.5h4"/><path d="M11.5 1 1.5 13.5" stroke="#d94f5c" stroke-width="1.1"/></g></svg><svg class="abs" style="left:214px;top:9px" width="16" height="13" viewBox="0 0 16 13"><g fill="none" stroke="#d9737c" stroke-width="1"><rect x="1.5" y="2.5" width="9" height="8" rx="1.5"/><path d="M10.5 5.5 14 3.5v6l-3.500-2z"/><path d="M13.500.8 1 12.200" stroke="#d94f5c" stroke-width="1.1"/></g></svg></div>
  <div class="abs row" style="top:328.0px"><div class="abs av" style="background:#eea41c">RO</div><div class="abs nm" style="letter-spacing:-0.25px">Regina Odinaeva (Guest)</div><svg class="abs" style="left:197px;top:8px" width="13" height="15" viewBox="0 0 13 15"><g fill="none" stroke="#d9737c" stroke-width="1"><rect x="4.5" y="1.5" width="4" height="7" rx="2"/><path d="M2.5 7a4 4 0 0 0 8 0M6.5 11v2.5M4.5 13.5h4"/><path d="M11.5 1 1.5 13.5" stroke="#d94f5c" stroke-width="1.1"/></g></svg><svg class="abs" style="left:214px;top:9px" width="16" height="13" viewBox="0 0 16 13"><g fill="none" stroke="#d9737c" stroke-width="1"><rect x="1.5" y="2.5" width="9" height="8" rx="1.5"/><path d="M10.5 5.5 14 3.5v6l-3.500-2z"/><path d="M13.500.8 1 12.200" stroke="#d94f5c" stroke-width="1.1"/></g></svg></div>
  <div class="abs row" style="top:358.75px"><div class="abs av" style="background:#2f3d55">ZK</div><div class="abs nm" style="letter-spacing:-0.18px">Zayniddin Khakberdiev (...&nbsp; (Guest)</div><svg class="abs" style="left:197px;top:8px" width="13" height="15" viewBox="0 0 13 15"><g fill="none" stroke="#d9737c" stroke-width="1"><rect x="4.5" y="1.5" width="4" height="7" rx="2"/><path d="M2.5 7a4 4 0 0 0 8 0M6.5 11v2.5M4.5 13.5h4"/><path d="M11.5 1 1.5 13.5" stroke="#d94f5c" stroke-width="1.1"/></g></svg><svg class="abs" style="left:214px;top:9px" width="16" height="13" viewBox="0 0 16 13"><g fill="none" stroke="#d9737c" stroke-width="1"><rect x="1.5" y="2.5" width="9" height="8" rx="1.5"/><path d="M10.5 5.5 14 3.5v6l-3.500-2z"/><path d="M13.500.8 1 12.200" stroke="#d94f5c" stroke-width="1.1"/></g></svg></div>
  <div class="abs row" style="top:389.5px"><div class="abs av" style="background:#8f40b1">C</div><div class="abs nm" style="letter-spacing:-0.18px">careercentre (Guest)</div></div>
  <div class="abs btn" style="left:32.300px;width:40px">Invite</div>
  <div class="abs btn" style="left:104.300px;width:53px">Mute All</div>
  <div class="abs btn" style="left:189.500px;width:18px;line-height:14.500px;letter-spacing:.3px">&middot;&middot;&middot;</div>
</div>

</body>
</html>
